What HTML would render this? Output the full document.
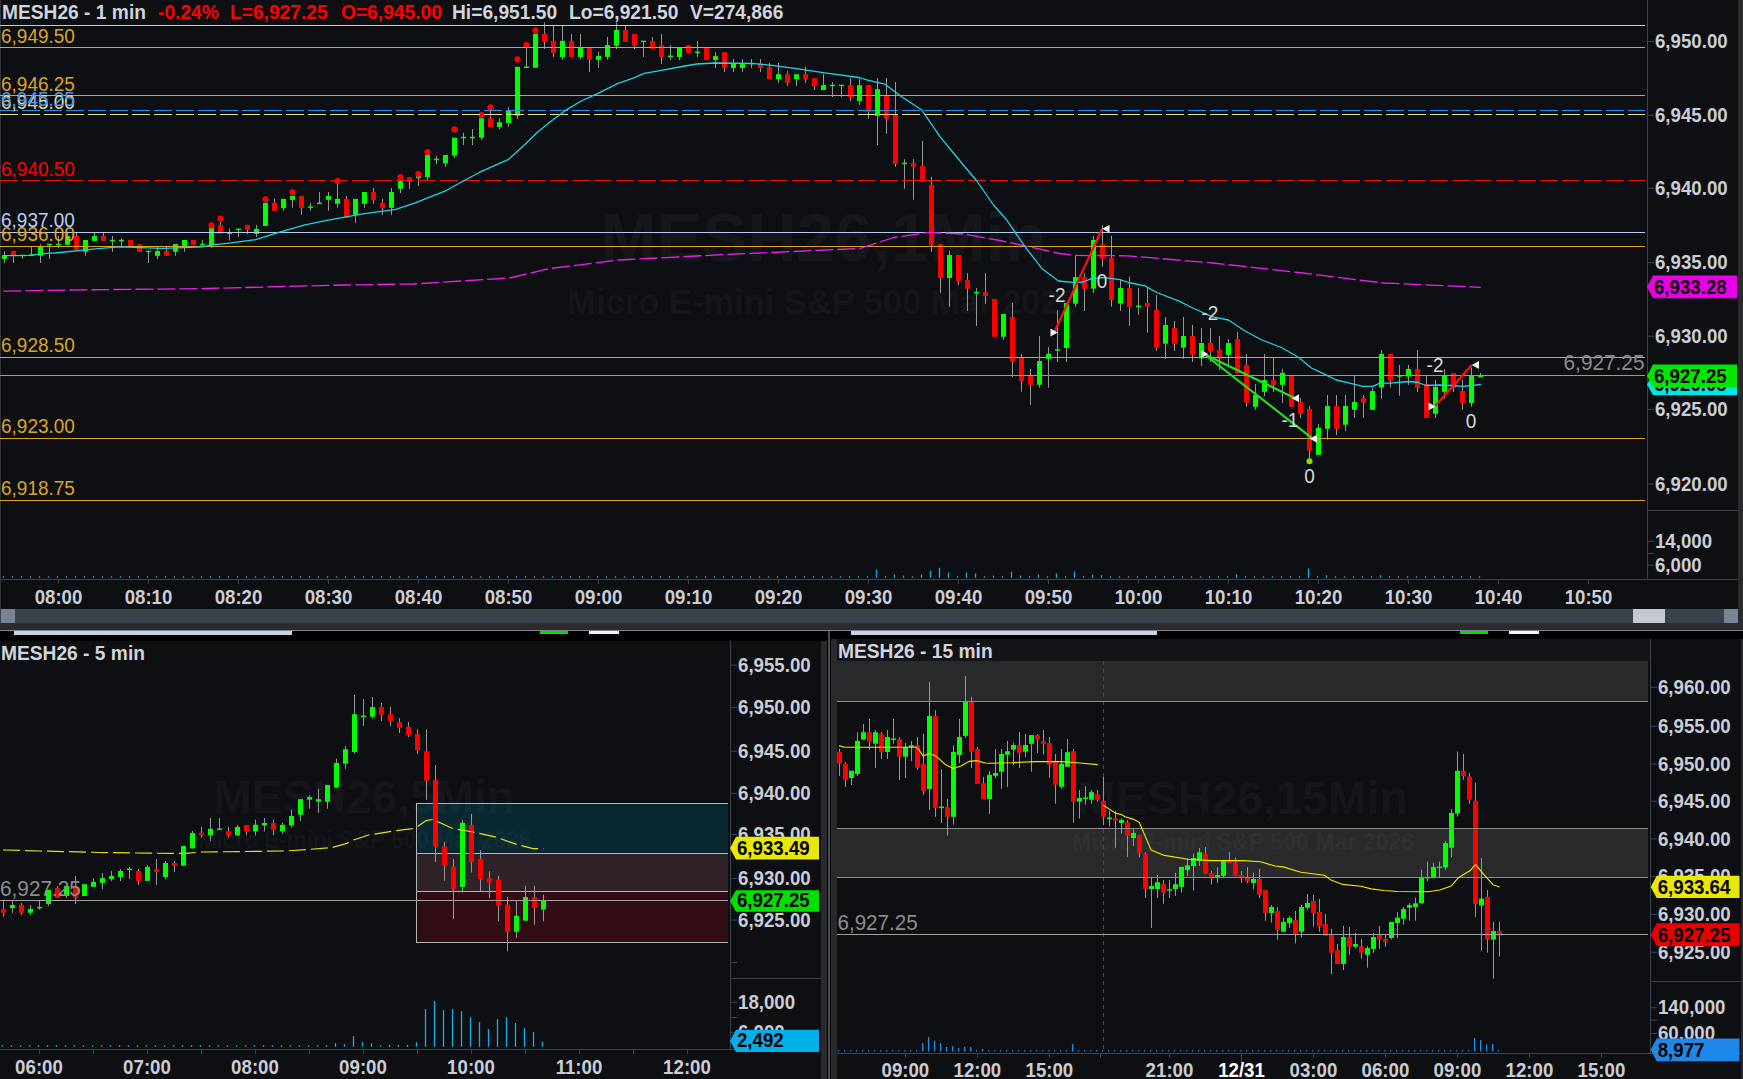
<!DOCTYPE html><html><head><meta charset="utf-8"><style>html,body{margin:0;padding:0;background:#0e0f12;width:1743px;height:1079px;overflow:hidden} svg{display:block} text{font-family:'Liberation Sans', sans-serif}</style></head><body><svg width="1743" height="1079" viewBox="0 0 1743 1079"><rect x="0" y="0" width="1743" height="1079" fill="#0e0f12"/><text x="823" y="260.7" font-size="68" fill="rgba(120,140,170,0.075)" font-weight="bold" text-anchor="middle" >MESH26,1Min</text><text x="823" y="313.7" font-size="34.5" fill="rgba(120,140,170,0.075)" font-weight="bold" text-anchor="middle" >Micro E-mini S&amp;P 500 Mar 2026</text><line x1="0.5" y1="0" x2="0.5" y2="609" stroke="#303236" stroke-width="1"/><rect x="4" y="251.2" width="1" height="11.8" fill="#969696"/><rect x="13" y="250.9" width="1" height="12.1" fill="#969696"/><rect x="22" y="255.4" width="1" height="3.4" fill="#969696"/><rect x="31" y="247.0" width="1" height="8.0" fill="#969696"/><rect x="40" y="244.3" width="1" height="18.7" fill="#969696"/><rect x="49" y="244.6" width="1" height="14.4" fill="#969696"/><rect x="58" y="236.0" width="1" height="12.0" fill="#969696"/><rect x="67" y="232.0" width="1" height="12.8" fill="#969696"/><rect x="76" y="232.0" width="1" height="18.8" fill="#969696"/><rect x="85" y="240.0" width="1" height="15.8" fill="#969696"/><rect x="94" y="233.0" width="1" height="7.9" fill="#969696"/><rect x="103" y="233.0" width="1" height="7.9" fill="#969696"/><rect x="112" y="236.0" width="1" height="15.8" fill="#969696"/><rect x="121" y="238.6" width="1" height="9.4" fill="#969696"/><rect x="130" y="240.0" width="1" height="5.9" fill="#969696"/><rect x="139" y="244.2" width="1" height="7.6" fill="#969696"/><rect x="148" y="251.4" width="1" height="11.6" fill="#969696"/><rect x="157" y="247.0" width="1" height="12.0" fill="#969696"/><rect x="166" y="247.0" width="1" height="8.8" fill="#969696"/><rect x="175" y="244.0" width="1" height="11.8" fill="#969696"/><rect x="184" y="240.0" width="1" height="11.8" fill="#969696"/><rect x="193" y="240.0" width="1" height="4.8" fill="#969696"/><rect x="202" y="240.0" width="1" height="5.2" fill="#969696"/><rect x="211" y="226.7" width="1" height="21.3" fill="#969696"/><rect x="220" y="222.0" width="1" height="11.7" fill="#969696"/><rect x="229" y="228.6" width="1" height="11.9" fill="#969696"/><rect x="238" y="229.3" width="1" height="7.7" fill="#969696"/><rect x="247" y="224.9" width="1" height="9.0" fill="#969696"/><rect x="256" y="224.9" width="1" height="12.1" fill="#969696"/><rect x="265" y="202.9" width="1" height="23.1" fill="#969696"/><rect x="274" y="199.0" width="1" height="11.8" fill="#969696"/><rect x="283" y="198.9" width="1" height="11.9" fill="#969696"/><rect x="292" y="195.9" width="1" height="11.9" fill="#969696"/><rect x="301" y="195.9" width="1" height="18.9" fill="#969696"/><rect x="310" y="202.9" width="1" height="7.9" fill="#969696"/><rect x="319" y="192.0" width="1" height="11.3" fill="#969696"/><rect x="328" y="192.0" width="1" height="18.8" fill="#969696"/><rect x="337" y="183.8" width="1" height="24.0" fill="#969696"/><rect x="346" y="196.0" width="1" height="22.0" fill="#969696"/><rect x="355" y="198.9" width="1" height="24.2" fill="#969696"/><rect x="364" y="192.0" width="1" height="15.8" fill="#969696"/><rect x="373" y="188.0" width="1" height="15.8" fill="#969696"/><rect x="382" y="198.9" width="1" height="15.9" fill="#969696"/><rect x="391" y="188.0" width="1" height="26.8" fill="#969696"/><rect x="400" y="181.1" width="1" height="11.9" fill="#969696"/><rect x="409" y="177.2" width="1" height="11.6" fill="#969696"/><rect x="418" y="176.1" width="1" height="9.9" fill="#969696"/><rect x="427" y="152.0" width="1" height="28.0" fill="#969696"/><rect x="436" y="156.0" width="1" height="8.0" fill="#969696"/><rect x="445" y="155.0" width="1" height="12.0" fill="#969696"/><rect x="454" y="137.7" width="1" height="20.3" fill="#969696"/><rect x="463" y="132.8" width="1" height="12.2" fill="#969696"/><rect x="472" y="129.0" width="1" height="16.0" fill="#969696"/><rect x="481" y="118.3" width="1" height="21.7" fill="#969696"/><rect x="490" y="111.0" width="1" height="15.9" fill="#969696"/><rect x="499" y="118.3" width="1" height="11.2" fill="#969696"/><rect x="508" y="107.0" width="1" height="19.9" fill="#969696"/><rect x="517" y="66.8" width="1" height="52.2" fill="#969696"/><rect x="526" y="45.0" width="1" height="22.2" fill="#969696"/><rect x="535" y="33.9" width="1" height="33.9" fill="#969696"/><rect x="544" y="22.4" width="1" height="26.6" fill="#969696"/><rect x="553" y="26.0" width="1" height="31.0" fill="#969696"/><rect x="562" y="26.0" width="1" height="33.6" fill="#969696"/><rect x="571" y="33.9" width="1" height="23.1" fill="#969696"/><rect x="580" y="33.9" width="1" height="25.7" fill="#969696"/><rect x="589" y="47.7" width="1" height="24.3" fill="#969696"/><rect x="598" y="51.7" width="1" height="16.1" fill="#969696"/><rect x="607" y="36.9" width="1" height="22.7" fill="#969696"/><rect x="616" y="22.6" width="1" height="26.4" fill="#969696"/><rect x="625" y="26.0" width="1" height="15.8" fill="#969696"/><rect x="634" y="33.9" width="1" height="15.1" fill="#969696"/><rect x="643" y="41.4" width="1" height="15.6" fill="#969696"/><rect x="652" y="36.9" width="1" height="11.8" fill="#969696"/><rect x="661" y="34.0" width="1" height="30.0" fill="#969696"/><rect x="670" y="45.2" width="1" height="14.8" fill="#969696"/><rect x="679" y="47.8" width="1" height="12.2" fill="#969696"/><rect x="688" y="45.2" width="1" height="7.6" fill="#969696"/><rect x="697" y="41.2" width="1" height="15.8" fill="#969696"/><rect x="706" y="47.8" width="1" height="12.2" fill="#969696"/><rect x="715" y="52.2" width="1" height="15.8" fill="#969696"/><rect x="724" y="52.2" width="1" height="19.8" fill="#969696"/><rect x="733" y="59.0" width="1" height="13.0" fill="#969696"/><rect x="742" y="59.0" width="1" height="13.0" fill="#969696"/><rect x="751" y="59.0" width="1" height="9.0" fill="#969696"/><rect x="760" y="59.0" width="1" height="13.0" fill="#969696"/><rect x="769" y="63.0" width="1" height="16.1" fill="#969696"/><rect x="778" y="63.0" width="1" height="19.8" fill="#969696"/><rect x="787" y="71.2" width="1" height="14.8" fill="#969696"/><rect x="796" y="74.2" width="1" height="11.8" fill="#969696"/><rect x="805" y="67.0" width="1" height="15.8" fill="#969696"/><rect x="814" y="78.2" width="1" height="11.8" fill="#969696"/><rect x="823" y="74.2" width="1" height="15.8" fill="#969696"/><rect x="832" y="82.1" width="1" height="14.9" fill="#969696"/><rect x="841" y="85.4" width="1" height="11.6" fill="#969696"/><rect x="850" y="78.2" width="1" height="23.1" fill="#969696"/><rect x="859" y="78.2" width="1" height="26.8" fill="#969696"/><rect x="868" y="85.0" width="1" height="33.7" fill="#969696"/><rect x="877" y="78.0" width="1" height="67.0" fill="#969696"/><rect x="886" y="78.0" width="1" height="55.7" fill="#969696"/><rect x="895" y="82.0" width="1" height="84.8" fill="#969696"/><rect x="904" y="159.3" width="1" height="29.5" fill="#969696"/><rect x="913" y="159.3" width="1" height="40.5" fill="#969696"/><rect x="922" y="140.9" width="1" height="40.9" fill="#969696"/><rect x="931" y="176.8" width="1" height="74.9" fill="#969696"/><rect x="940" y="244.2" width="1" height="48.7" fill="#969696"/><rect x="949" y="250.9" width="1" height="55.9" fill="#969696"/><rect x="958" y="255.0" width="1" height="30.0" fill="#969696"/><rect x="967" y="273.0" width="1" height="38.0" fill="#969696"/><rect x="976" y="288.0" width="1" height="38.0" fill="#969696"/><rect x="985" y="273.0" width="1" height="30.7" fill="#969696"/><rect x="994" y="299.0" width="1" height="37.8" fill="#969696"/><rect x="1003" y="314.0" width="1" height="25.8" fill="#969696"/><rect x="1012" y="303.0" width="1" height="73.8" fill="#969696"/><rect x="1021" y="353.8" width="1" height="38.0" fill="#969696"/><rect x="1030" y="368.8" width="1" height="36.2" fill="#969696"/><rect x="1039" y="336.0" width="1" height="51.7" fill="#969696"/><rect x="1048" y="347.0" width="1" height="40.7" fill="#969696"/><rect x="1057" y="310.0" width="1" height="52.0" fill="#969696"/><rect x="1066" y="303.0" width="1" height="59.0" fill="#969696"/><rect x="1075" y="255.9" width="1" height="50.9" fill="#969696"/><rect x="1084" y="273.4" width="1" height="37.6" fill="#969696"/><rect x="1093" y="235.8" width="1" height="57.1" fill="#969696"/><rect x="1102" y="225.0" width="1" height="41.7" fill="#969696"/><rect x="1111" y="235.8" width="1" height="70.9" fill="#969696"/><rect x="1120" y="280.0" width="1" height="30.9" fill="#969696"/><rect x="1129" y="276.7" width="1" height="49.2" fill="#969696"/><rect x="1138" y="288.0" width="1" height="26.7" fill="#969696"/><rect x="1147" y="288.0" width="1" height="44.6" fill="#969696"/><rect x="1156" y="295.0" width="1" height="56.0" fill="#969696"/><rect x="1165" y="317.0" width="1" height="41.8" fill="#969696"/><rect x="1174" y="321.0" width="1" height="30.0" fill="#969696"/><rect x="1183" y="317.0" width="1" height="41.8" fill="#969696"/><rect x="1192" y="325.0" width="1" height="36.8" fill="#969696"/><rect x="1201" y="328.0" width="1" height="38.0" fill="#969696"/><rect x="1210" y="328.0" width="1" height="33.8" fill="#969696"/><rect x="1219" y="336.0" width="1" height="34.0" fill="#969696"/><rect x="1228" y="339.0" width="1" height="27.0" fill="#969696"/><rect x="1237" y="332.0" width="1" height="41.4" fill="#969696"/><rect x="1246" y="354.0" width="1" height="52.8" fill="#969696"/><rect x="1255" y="384.0" width="1" height="25.8" fill="#969696"/><rect x="1264" y="354.0" width="1" height="42.0" fill="#969696"/><rect x="1273" y="358.0" width="1" height="34.0" fill="#969696"/><rect x="1282" y="368.8" width="1" height="34.2" fill="#969696"/><rect x="1291" y="376.0" width="1" height="30.9" fill="#969696"/><rect x="1300" y="398.0" width="1" height="19.8" fill="#969696"/><rect x="1309" y="406.0" width="1" height="52.8" fill="#969696"/><rect x="1318" y="424.0" width="1" height="30.8" fill="#969696"/><rect x="1327" y="395.0" width="1" height="44.5" fill="#969696"/><rect x="1336" y="395.0" width="1" height="40.0" fill="#969696"/><rect x="1345" y="395.0" width="1" height="36.0" fill="#969696"/><rect x="1354" y="375.7" width="1" height="42.1" fill="#969696"/><rect x="1363" y="395.0" width="1" height="22.8" fill="#969696"/><rect x="1372" y="387.5" width="1" height="22.3" fill="#969696"/><rect x="1381" y="350.0" width="1" height="48.8" fill="#969696"/><rect x="1390" y="354.0" width="1" height="33.5" fill="#969696"/><rect x="1399" y="365.0" width="1" height="30.7" fill="#969696"/><rect x="1408" y="365.0" width="1" height="20.0" fill="#969696"/><rect x="1417" y="350.0" width="1" height="42.0" fill="#969696"/><rect x="1426" y="375.9" width="1" height="42.1" fill="#969696"/><rect x="1435" y="380.0" width="1" height="38.0" fill="#969696"/><rect x="1444" y="369.0" width="1" height="29.8" fill="#969696"/><rect x="1453" y="373.0" width="1" height="19.0" fill="#969696"/><rect x="1462" y="380.0" width="1" height="29.6" fill="#969696"/><rect x="1471" y="367.5" width="1" height="39.2" fill="#969696"/><rect x="1480" y="373.0" width="1" height="3.3" fill="#969696"/><rect x="2" y="255.1" width="5" height="4.0" fill="#00ff00"/><rect x="11" y="250.9" width="5" height="4.0" fill="#ff0000"/><rect x="20" y="254.7" width="5" height="1.5" fill="#00ff00"/><rect x="29" y="254.2" width="5" height="1.5" fill="#00ff00"/><rect x="38" y="247.0" width="5" height="8.8" fill="#00ff00"/><rect x="47" y="243.8" width="5" height="1.5" fill="#00ff00"/><rect x="56" y="243.8" width="5" height="1.5" fill="#00ff00"/><rect x="65" y="236.0" width="5" height="8.8" fill="#00ff00"/><rect x="74" y="236.0" width="5" height="14.8" fill="#ff0000"/><rect x="83" y="240.0" width="5" height="11.8" fill="#00ff00"/><rect x="92" y="236.0" width="5" height="4.9" fill="#00ff00"/><rect x="101" y="236.0" width="5" height="4.9" fill="#ff0000"/><rect x="110" y="239.8" width="5" height="1.5" fill="#00ff00"/><rect x="119" y="239.8" width="5" height="1.5" fill="#00ff00"/><rect x="128" y="240.0" width="5" height="5.9" fill="#ff0000"/><rect x="137" y="244.2" width="5" height="7.6" fill="#ff0000"/><rect x="146" y="250.7" width="5" height="1.5" fill="#00ff00"/><rect x="155" y="251.0" width="5" height="4.8" fill="#00ff00"/><rect x="164" y="251.0" width="5" height="4.8" fill="#ff0000"/><rect x="173" y="244.0" width="5" height="7.8" fill="#00ff00"/><rect x="182" y="240.0" width="5" height="5.9" fill="#00ff00"/><rect x="191" y="240.0" width="5" height="4.8" fill="#ff0000"/><rect x="200" y="243.8" width="5" height="1.5" fill="#00ff00"/><rect x="209" y="226.7" width="5" height="18.5" fill="#00ff00"/><rect x="218" y="225.2" width="5" height="8.5" fill="#ff0000"/><rect x="227" y="232.4" width="5" height="1.5" fill="#00ff00"/><rect x="236" y="228.6" width="5" height="1.5" fill="#00ff00"/><rect x="245" y="224.9" width="5" height="5.0" fill="#ff0000"/><rect x="254" y="228.9" width="5" height="5.0" fill="#00ff00"/><rect x="263" y="202.9" width="5" height="23.1" fill="#00ff00"/><rect x="272" y="202.9" width="5" height="7.9" fill="#ff0000"/><rect x="281" y="198.9" width="5" height="9.3" fill="#00ff00"/><rect x="290" y="195.9" width="5" height="4.0" fill="#00ff00"/><rect x="299" y="195.9" width="5" height="11.9" fill="#ff0000"/><rect x="308" y="206.4" width="5" height="1.5" fill="#00ff00"/><rect x="317" y="202.6" width="5" height="1.5" fill="#00ff00"/><rect x="326" y="195.9" width="5" height="4.0" fill="#00ff00"/><rect x="335" y="198.9" width="5" height="4.9" fill="#00ff00"/><rect x="344" y="198.9" width="5" height="19.1" fill="#ff0000"/><rect x="353" y="198.9" width="5" height="15.9" fill="#00ff00"/><rect x="362" y="192.0" width="5" height="11.8" fill="#00ff00"/><rect x="371" y="192.0" width="5" height="7.9" fill="#ff0000"/><rect x="380" y="202.9" width="5" height="4.9" fill="#ff0000"/><rect x="389" y="192.0" width="5" height="15.8" fill="#00ff00"/><rect x="398" y="181.1" width="5" height="7.7" fill="#00ff00"/><rect x="407" y="177.2" width="5" height="4.6" fill="#ff0000"/><rect x="416" y="176.1" width="5" height="2.1" fill="#00ff00"/><rect x="425" y="155.0" width="5" height="22.0" fill="#00ff00"/><rect x="434" y="158.7" width="5" height="1.5" fill="#00ff00"/><rect x="443" y="155.0" width="5" height="8.5" fill="#00ff00"/><rect x="452" y="137.7" width="5" height="17.9" fill="#00ff00"/><rect x="461" y="136.8" width="5" height="1.5" fill="#00ff00"/><rect x="470" y="136.8" width="5" height="1.5" fill="#00ff00"/><rect x="479" y="118.3" width="5" height="19.4" fill="#00ff00"/><rect x="488" y="118.3" width="5" height="8.6" fill="#ff0000"/><rect x="497" y="122.3" width="5" height="4.6" fill="#00ff00"/><rect x="506" y="111.0" width="5" height="12.0" fill="#00ff00"/><rect x="515" y="66.8" width="5" height="48.9" fill="#00ff00"/><rect x="524" y="66.5" width="5" height="1.5" fill="#00ff00"/><rect x="533" y="33.9" width="5" height="33.9" fill="#00ff00"/><rect x="542" y="33.9" width="5" height="7.9" fill="#ff0000"/><rect x="551" y="40.8" width="5" height="11.9" fill="#ff0000"/><rect x="560" y="40.8" width="5" height="16.2" fill="#00ff00"/><rect x="569" y="40.8" width="5" height="16.2" fill="#ff0000"/><rect x="578" y="47.7" width="5" height="9.3" fill="#00ff00"/><rect x="587" y="47.7" width="5" height="11.9" fill="#ff0000"/><rect x="596" y="55.9" width="5" height="4.0" fill="#00ff00"/><rect x="605" y="45.0" width="5" height="12.0" fill="#00ff00"/><rect x="614" y="29.9" width="5" height="15.8" fill="#00ff00"/><rect x="623" y="29.9" width="5" height="11.9" fill="#ff0000"/><rect x="632" y="33.9" width="5" height="11.8" fill="#ff0000"/><rect x="641" y="40.6" width="5" height="1.5" fill="#00ff00"/><rect x="650" y="41.2" width="5" height="7.5" fill="#ff0000"/><rect x="659" y="45.2" width="5" height="11.8" fill="#ff0000"/><rect x="668" y="55.6" width="5" height="1.5" fill="#00ff00"/><rect x="677" y="47.8" width="5" height="9.2" fill="#00ff00"/><rect x="686" y="45.2" width="5" height="7.6" fill="#ff0000"/><rect x="695" y="51.6" width="5" height="1.5" fill="#00ff00"/><rect x="704" y="47.8" width="5" height="12.2" fill="#ff0000"/><rect x="713" y="56.1" width="5" height="3.9" fill="#00ff00"/><rect x="722" y="52.2" width="5" height="15.8" fill="#ff0000"/><rect x="731" y="64.0" width="5" height="4.0" fill="#00ff00"/><rect x="740" y="64.0" width="5" height="4.0" fill="#00ff00"/><rect x="749" y="62.9" width="5" height="1.5" fill="#00ff00"/><rect x="758" y="63.3" width="5" height="4.7" fill="#ff0000"/><rect x="767" y="67.2" width="5" height="11.9" fill="#ff0000"/><rect x="776" y="74.2" width="5" height="4.9" fill="#00ff00"/><rect x="785" y="74.2" width="5" height="8.6" fill="#ff0000"/><rect x="794" y="74.2" width="5" height="4.9" fill="#00ff00"/><rect x="803" y="74.2" width="5" height="4.9" fill="#ff0000"/><rect x="812" y="78.2" width="5" height="7.8" fill="#ff0000"/><rect x="821" y="85.2" width="5" height="4.8" fill="#00ff00"/><rect x="830" y="84.7" width="5" height="1.5" fill="#00ff00"/><rect x="839" y="84.7" width="5" height="1.5" fill="#00ff00"/><rect x="848" y="85.2" width="5" height="11.8" fill="#ff0000"/><rect x="857" y="85.2" width="5" height="15.8" fill="#00ff00"/><rect x="866" y="85.0" width="5" height="26.7" fill="#ff0000"/><rect x="875" y="89.2" width="5" height="26.7" fill="#00ff00"/><rect x="884" y="95.9" width="5" height="22.8" fill="#ff0000"/><rect x="893" y="114.2" width="5" height="49.6" fill="#ff0000"/><rect x="902" y="162.7" width="5" height="1.5" fill="#00ff00"/><rect x="911" y="163.0" width="5" height="3.8" fill="#ff0000"/><rect x="920" y="166.0" width="5" height="15.8" fill="#ff0000"/><rect x="929" y="184.8" width="5" height="60.0" fill="#ff0000"/><rect x="938" y="244.2" width="5" height="33.8" fill="#ff0000"/><rect x="947" y="255.0" width="5" height="23.0" fill="#00ff00"/><rect x="956" y="255.0" width="5" height="25.9" fill="#ff0000"/><rect x="965" y="280.0" width="5" height="8.7" fill="#ff0000"/><rect x="974" y="291.9" width="5" height="1.5" fill="#00ff00"/><rect x="983" y="292.0" width="5" height="4.0" fill="#ff0000"/><rect x="992" y="299.0" width="5" height="37.8" fill="#ff0000"/><rect x="1001" y="314.0" width="5" height="22.8" fill="#00ff00"/><rect x="1010" y="317.0" width="5" height="44.8" fill="#ff0000"/><rect x="1019" y="357.6" width="5" height="23.4" fill="#ff0000"/><rect x="1028" y="376.0" width="5" height="8.8" fill="#ff0000"/><rect x="1037" y="361.0" width="5" height="23.8" fill="#00ff00"/><rect x="1046" y="353.8" width="5" height="5.0" fill="#00ff00"/><rect x="1055" y="349.2" width="5" height="1.5" fill="#00ff00"/><rect x="1064" y="303.0" width="5" height="45.0" fill="#00ff00"/><rect x="1073" y="277.0" width="5" height="26.7" fill="#00ff00"/><rect x="1082" y="277.0" width="5" height="11.7" fill="#ff0000"/><rect x="1091" y="240.0" width="5" height="48.7" fill="#00ff00"/><rect x="1100" y="244.2" width="5" height="14.5" fill="#ff0000"/><rect x="1109" y="258.0" width="5" height="42.0" fill="#ff0000"/><rect x="1118" y="288.0" width="5" height="15.7" fill="#00ff00"/><rect x="1127" y="288.0" width="5" height="18.7" fill="#ff0000"/><rect x="1136" y="305.6" width="5" height="1.5" fill="#00ff00"/><rect x="1145" y="303.0" width="5" height="3.7" fill="#ff0000"/><rect x="1154" y="310.0" width="5" height="37.6" fill="#ff0000"/><rect x="1163" y="325.0" width="5" height="18.7" fill="#00ff00"/><rect x="1172" y="328.0" width="5" height="15.7" fill="#ff0000"/><rect x="1181" y="336.0" width="5" height="11.6" fill="#00ff00"/><rect x="1190" y="336.0" width="5" height="18.8" fill="#ff0000"/><rect x="1199" y="343.0" width="5" height="15.4" fill="#00ff00"/><rect x="1208" y="343.0" width="5" height="8.0" fill="#ff0000"/><rect x="1217" y="350.0" width="5" height="8.4" fill="#ff0000"/><rect x="1226" y="343.0" width="5" height="11.8" fill="#00ff00"/><rect x="1235" y="339.0" width="5" height="34.4" fill="#ff0000"/><rect x="1244" y="365.0" width="5" height="37.6" fill="#ff0000"/><rect x="1253" y="394.8" width="5" height="12.0" fill="#00ff00"/><rect x="1262" y="380.0" width="5" height="11.8" fill="#00ff00"/><rect x="1271" y="380.0" width="5" height="4.8" fill="#ff0000"/><rect x="1280" y="372.9" width="5" height="11.9" fill="#00ff00"/><rect x="1289" y="376.0" width="5" height="30.9" fill="#ff0000"/><rect x="1298" y="402.0" width="5" height="11.8" fill="#ff0000"/><rect x="1307" y="408.8" width="5" height="41.9" fill="#ff0000"/><rect x="1316" y="427.8" width="5" height="27.0" fill="#00ff00"/><rect x="1325" y="406.0" width="5" height="22.8" fill="#00ff00"/><rect x="1334" y="406.0" width="5" height="22.8" fill="#ff0000"/><rect x="1343" y="406.0" width="5" height="18.8" fill="#00ff00"/><rect x="1352" y="402.0" width="5" height="7.8" fill="#00ff00"/><rect x="1361" y="398.0" width="5" height="4.8" fill="#ff0000"/><rect x="1370" y="391.0" width="5" height="18.8" fill="#00ff00"/><rect x="1379" y="354.0" width="5" height="33.5" fill="#00ff00"/><rect x="1388" y="354.0" width="5" height="26.7" fill="#ff0000"/><rect x="1397" y="375.2" width="5" height="1.5" fill="#00ff00"/><rect x="1406" y="369.0" width="5" height="7.5" fill="#00ff00"/><rect x="1415" y="369.0" width="5" height="19.0" fill="#ff0000"/><rect x="1424" y="384.0" width="5" height="34.0" fill="#ff0000"/><rect x="1433" y="387.0" width="5" height="26.8" fill="#00ff00"/><rect x="1442" y="375.9" width="5" height="16.0" fill="#00ff00"/><rect x="1451" y="373.0" width="5" height="15.0" fill="#ff0000"/><rect x="1460" y="391.0" width="5" height="12.0" fill="#ff0000"/><rect x="1469" y="375.9" width="5" height="27.1" fill="#00ff00"/><rect x="1478" y="375.6" width="5" height="1.5" fill="#00ff00"/><circle cx="211.5" cy="225.4" r="3.1" fill="#ff0000"/><circle cx="220.5" cy="218.6" r="3.1" fill="#ff0000"/><circle cx="265.5" cy="199.3" r="3.1" fill="#ff0000"/><circle cx="292.5" cy="192.3" r="3.1" fill="#ff0000"/><circle cx="337.5" cy="181.1" r="3.1" fill="#ff0000"/><circle cx="400.5" cy="177.2" r="3.1" fill="#ff0000"/><circle cx="418.5" cy="174.1" r="3.1" fill="#ff0000"/><circle cx="427.5" cy="152" r="3.1" fill="#ff0000"/><circle cx="454.5" cy="129.4" r="3.1" fill="#ff0000"/><circle cx="481.5" cy="115" r="3.1" fill="#ff0000"/><circle cx="490.5" cy="107.4" r="3.1" fill="#ff0000"/><circle cx="517.5" cy="59.3" r="3.1" fill="#ff0000"/><circle cx="526.5" cy="45" r="3.1" fill="#ff0000"/><circle cx="535.5" cy="30.3" r="3.1" fill="#ff0000"/><circle cx="1309.5" cy="461.3" r="3" fill="#88e000"/><line x1="0" y1="25.5" x2="1645" y2="25.5" stroke="#b4cdf0" stroke-width="1"/><line x1="0" y1="47.5" x2="1645" y2="47.5" stroke="#dba427" stroke-width="1"/><line x1="0" y1="95.5" x2="1645" y2="95.5" stroke="#dba427" stroke-width="1"/><line x1="0" y1="114.5" x2="1645" y2="114.5" stroke="#efdc8a" stroke-width="1" stroke-dasharray="18,4"/><line x1="0" y1="110.5" x2="1645" y2="110.5" stroke="#2f8ff0" stroke-width="1" stroke-dasharray="18,4"/><line x1="0" y1="180.5" x2="1645" y2="180.5" stroke="#f01010" stroke-width="1" stroke-dasharray="18,4"/><line x1="0" y1="232.5" x2="1645" y2="232.5" stroke="#b4cdf0" stroke-width="1"/><line x1="0" y1="246.5" x2="1645" y2="246.5" stroke="#dba427" stroke-width="1"/><line x1="0" y1="357.5" x2="1645" y2="357.5" stroke="#dba427" stroke-width="1"/><line x1="0" y1="375.5" x2="1645" y2="375.5" stroke="#9a9a9a" stroke-width="1"/><line x1="0" y1="438.5" x2="1645" y2="438.5" stroke="#dba427" stroke-width="1"/><line x1="0" y1="500.5" x2="1645" y2="500.5" stroke="#dba427" stroke-width="1"/><text x="1" y="43" font-size="19" fill="#dba427" font-weight="normal" text-anchor="start" transform="matrix(1,0,0,1.07,0,-3.01)" >6,949.50</text><text x="1" y="90.7" font-size="19" fill="#dba427" font-weight="normal" text-anchor="start" transform="matrix(1,0,0,1.07,0,-6.35)" >6,946.25</text><text x="1" y="109.5" font-size="19" fill="#e9d890" font-weight="normal" text-anchor="start" transform="matrix(1,0,0,1.07,0,-7.67)" >6,945.00</text><text x="1" y="105.8" font-size="19" fill="#3f9af2" font-weight="normal" text-anchor="start" transform="matrix(1,0,0,1.07,0,-7.41)" >6,945.25</text><text x="1" y="175.7" font-size="19" fill="#ff0000" font-weight="normal" text-anchor="start" transform="matrix(1,0,0,1.07,0,-12.30)" >6,940.50</text><text x="1" y="226.7" font-size="19" fill="#b4cdf0" font-weight="normal" text-anchor="start" transform="matrix(1,0,0,1.07,0,-15.87)" >6,937.00</text><text x="1" y="241.3" font-size="19" fill="#dba427" font-weight="normal" text-anchor="start" transform="matrix(1,0,0,1.07,0,-16.89)" >6,936.00</text><text x="1" y="352" font-size="19" fill="#dba427" font-weight="normal" text-anchor="start" transform="matrix(1,0,0,1.07,0,-24.64)" >6,928.50</text><text x="1" y="433.5" font-size="19" fill="#dba427" font-weight="normal" text-anchor="start" transform="matrix(1,0,0,1.07,0,-30.35)" >6,923.00</text><text x="1" y="495.5" font-size="19" fill="#dba427" font-weight="normal" text-anchor="start" transform="matrix(1,0,0,1.07,0,-34.69)" >6,918.75</text><text x="1644.5" y="370.5" font-size="20.8" fill="#8c8c8c" font-weight="normal" text-anchor="end" transform="matrix(1,0,0,1.07,0,-25.94)" >6,927.25</text><polyline points="3.4,291.2 68.8,290.0 206.5,288.5 344.0,285.0 413.0,284.0 509.5,278.0 550.0,268.5 618.8,260.0 722.0,254.7 860.0,248.5 894.0,237.5 928.7,232.4 963.0,234.0 1000.0,240.5 1040.0,249.2 1059.7,253.5 1075.0,255.4 1128.0,255.8 1213.0,263.0 1298.4,272.5 1383.6,283.0 1480.8,287.4" fill="none" stroke="#ec22ec" stroke-width="1.3" stroke-dasharray="18,4" stroke-linejoin="round"/><polyline points="3.4,255.6 32.7,255.4 37.9,254.2 49.9,253.2 55.0,253.0 76.5,250.9 98.0,248.7 119.5,246.8 141.0,247.7 162.6,248.3 184.1,247.7 202.7,246.8 212.8,244.8 227.1,243.4 255.8,239.7 277.3,232.9 305.0,224.8 327.0,220.3 361.4,214.1 395.9,209.3 415.8,202.6 431.5,196.3 445.7,190.8 463.0,181.3 478.8,172.7 494.5,165.6 508.7,159.3 526.0,143.5 537.1,132.5 549.7,122.2 565.5,110.4 581.2,101.0 597.0,93.9 617.5,83.6 633.2,78.1 644.2,73.4 660.0,70.7 679.6,67.0 696.7,64.0 715.2,63.0 752.2,63.3 772.0,65.4 798.4,68.9 824.7,72.9 859.0,77.5 868.3,80.3 885.0,84.2 901.7,96.7 921.7,110.0 940.0,136.7 960.0,161.0 976.8,181.0 993.5,205.0 1006.7,220.0 1025.0,246.7 1041.8,268.4 1058.5,281.0 1075.0,282.6 1083.5,282.0 1091.8,278.4 1105.0,277.6 1120.0,279.7 1128.4,282.5 1145.0,285.9 1156.7,292.5 1178.4,300.9 1191.8,307.5 1211.8,316.7 1228.5,320.0 1245.0,331.0 1261.8,340.0 1281.3,347.5 1298.8,357.5 1311.3,368.0 1325.0,374.4 1336.3,380.0 1352.6,383.8 1362.6,386.3 1372.6,386.3 1380.0,383.2 1390.0,383.2 1408.9,381.5 1418.3,382.5 1425.8,385.5 1439.2,385.0 1451.7,385.5 1462.5,386.3 1472.6,385.5 1481.0,384.4" fill="none" stroke="#20d4e4" stroke-width="1.3" stroke-linejoin="round"/><polyline points="1054.0,333.0 1102.0,229.0" fill="none" stroke="#ff1010" stroke-width="2.2" stroke-linejoin="round"/><path d="M1050.5,328.6 L1057.7,332.6 L1050.5,336.6 Z" fill="#f4f2ea"/><path d="M1109.5,224.8 L1102.3,228.8 L1109.5,232.8 Z" fill="#f4f2ea"/><polyline points="1204.0,354.0 1295.0,398.2" fill="none" stroke="#20e020" stroke-width="2.2" stroke-linejoin="round"/><polyline points="1204.0,354.0 1313.0,438.8" fill="none" stroke="#20e020" stroke-width="2.2" stroke-linejoin="round"/><path d="M1201,350.0 L1208.2,354 L1201,358.0 Z" fill="#f4f2ea"/><path d="M1299,394.2 L1291.8,398.2 L1299,402.2 Z" fill="#f4f2ea"/><path d="M1317,434.8 L1309.8,438.8 L1317,442.8 Z" fill="#f4f2ea"/><polyline points="1435.0,406.3 1471.7,365.0" fill="none" stroke="#ff1010" stroke-width="2.2" stroke-linejoin="round"/><path d="M1428.5,402.5 L1435.7,406.5 L1428.5,410.5 Z" fill="#f4f2ea"/><path d="M1479,361.0 L1471.8,365 L1479,369.0 Z" fill="#f4f2ea"/><text x="1057" y="302" font-size="19" fill="#d8d8d8" font-weight="normal" text-anchor="middle" transform="matrix(1,0,0,1.07,0,-21.14)" >-2</text><text x="1102" y="288" font-size="19" fill="#d8d8d8" font-weight="normal" text-anchor="middle" transform="matrix(1,0,0,1.07,0,-20.16)" >0</text><text x="1210" y="320" font-size="19" fill="#d8d8d8" font-weight="normal" text-anchor="middle" transform="matrix(1,0,0,1.07,0,-22.40)" >-2</text><text x="1290" y="427" font-size="19" fill="#d8d8d8" font-weight="normal" text-anchor="middle" transform="matrix(1,0,0,1.07,0,-29.89)" >-1</text><text x="1309.5" y="483" font-size="19" fill="#d8d8d8" font-weight="normal" text-anchor="middle" transform="matrix(1,0,0,1.07,0,-33.81)" >0</text><text x="1435" y="372" font-size="19" fill="#d8d8d8" font-weight="normal" text-anchor="middle" transform="matrix(1,0,0,1.07,0,-26.04)" >-2</text><text x="1471" y="428" font-size="19" fill="#d8d8d8" font-weight="normal" text-anchor="middle" transform="matrix(1,0,0,1.07,0,-29.96)" >0</text><text y="18.7" font-size="19.2" font-weight="bold" transform="matrix(1,0,0,1.04,0,-0.75)"><tspan x="2" fill="#d0d4dc">MESH26 - 1 min</tspan><tspan x="158" fill="#ff0000">-0.24%</tspan><tspan x="230" fill="#ff0000">L=6,927.25</tspan><tspan x="341" fill="#ff0000">O=6,945.00</tspan><tspan x="452" fill="#d0d4dc">Hi=6,951.50</tspan><tspan x="569" fill="#d0d4dc">Lo=6,921.50</tspan><tspan x="690" fill="#d0d4dc">V=274,866</tspan></text><rect x="2.85" y="576.3" width="1.3" height="1.5" fill="#10b0e8"/><rect x="11.85" y="576.3" width="1.3" height="1.5" fill="#10b0e8"/><rect x="20.85" y="576.3" width="1.3" height="1.5" fill="#10b0e8"/><rect x="29.85" y="576.3" width="1.3" height="1.5" fill="#10b0e8"/><rect x="38.85" y="576.3" width="1.3" height="1.5" fill="#10b0e8"/><rect x="47.85" y="576.3" width="1.3" height="1.5" fill="#10b0e8"/><rect x="56.85" y="576.3" width="1.3" height="1.5" fill="#10b0e8"/><rect x="65.85" y="576.3" width="1.3" height="1.5" fill="#10b0e8"/><rect x="74.85" y="576.3" width="1.3" height="1.5" fill="#10b0e8"/><rect x="83.85" y="576.3" width="1.3" height="1.5" fill="#10b0e8"/><rect x="92.85" y="576.3" width="1.3" height="1.5" fill="#10b0e8"/><rect x="101.85" y="576.3" width="1.3" height="1.5" fill="#10b0e8"/><rect x="110.85" y="576.3" width="1.3" height="1.5" fill="#10b0e8"/><rect x="119.85" y="576.3" width="1.3" height="1.5" fill="#10b0e8"/><rect x="128.85" y="576.3" width="1.3" height="1.5" fill="#10b0e8"/><rect x="137.85" y="576.3" width="1.3" height="1.5" fill="#10b0e8"/><rect x="146.85" y="576.3" width="1.3" height="1.5" fill="#10b0e8"/><rect x="155.85" y="576.3" width="1.3" height="1.5" fill="#10b0e8"/><rect x="164.85" y="576.3" width="1.3" height="1.5" fill="#10b0e8"/><rect x="173.85" y="576.3" width="1.3" height="1.5" fill="#10b0e8"/><rect x="182.85" y="576.3" width="1.3" height="1.5" fill="#10b0e8"/><rect x="191.85" y="576.3" width="1.3" height="1.5" fill="#10b0e8"/><rect x="200.85" y="576.3" width="1.3" height="1.5" fill="#10b0e8"/><rect x="209.85" y="576.3" width="1.3" height="1.5" fill="#10b0e8"/><rect x="218.85" y="576.3" width="1.3" height="1.5" fill="#10b0e8"/><rect x="227.85" y="576.3" width="1.3" height="1.5" fill="#10b0e8"/><rect x="236.85" y="576.3" width="1.3" height="1.5" fill="#10b0e8"/><rect x="245.85" y="576.3" width="1.3" height="1.5" fill="#10b0e8"/><rect x="254.85" y="576.3" width="1.3" height="1.5" fill="#10b0e8"/><rect x="263.85" y="576.3" width="1.3" height="1.5" fill="#10b0e8"/><rect x="272.85" y="576.3" width="1.3" height="1.5" fill="#10b0e8"/><rect x="281.85" y="576.3" width="1.3" height="1.5" fill="#10b0e8"/><rect x="290.85" y="576.3" width="1.3" height="1.5" fill="#10b0e8"/><rect x="299.85" y="576.3" width="1.3" height="1.5" fill="#10b0e8"/><rect x="308.85" y="576.3" width="1.3" height="1.5" fill="#10b0e8"/><rect x="317.85" y="576.3" width="1.3" height="1.5" fill="#10b0e8"/><rect x="326.85" y="576.3" width="1.3" height="1.5" fill="#10b0e8"/><rect x="335.85" y="576.3" width="1.3" height="1.5" fill="#10b0e8"/><rect x="344.85" y="576.3" width="1.3" height="1.5" fill="#10b0e8"/><rect x="353.85" y="576.3" width="1.3" height="1.5" fill="#10b0e8"/><rect x="362.85" y="576.3" width="1.3" height="1.5" fill="#10b0e8"/><rect x="371.85" y="576.3" width="1.3" height="1.5" fill="#10b0e8"/><rect x="380.85" y="576.3" width="1.3" height="1.5" fill="#10b0e8"/><rect x="389.85" y="576.3" width="1.3" height="1.5" fill="#10b0e8"/><rect x="398.85" y="576.3" width="1.3" height="1.5" fill="#10b0e8"/><rect x="407.85" y="576.3" width="1.3" height="1.5" fill="#10b0e8"/><rect x="416.85" y="576.3" width="1.3" height="1.5" fill="#10b0e8"/><rect x="425.85" y="576.3" width="1.3" height="1.5" fill="#10b0e8"/><rect x="434.85" y="576.3" width="1.3" height="1.5" fill="#10b0e8"/><rect x="443.85" y="576.3" width="1.3" height="1.5" fill="#10b0e8"/><rect x="452.85" y="576.3" width="1.3" height="1.5" fill="#10b0e8"/><rect x="461.85" y="576.3" width="1.3" height="1.5" fill="#10b0e8"/><rect x="470.85" y="576.3" width="1.3" height="1.5" fill="#10b0e8"/><rect x="479.85" y="576.3" width="1.3" height="1.5" fill="#10b0e8"/><rect x="488.85" y="576.3" width="1.3" height="1.5" fill="#10b0e8"/><rect x="497.85" y="576.3" width="1.3" height="1.5" fill="#10b0e8"/><rect x="506.85" y="576.3" width="1.3" height="1.5" fill="#10b0e8"/><rect x="515.85" y="576.3" width="1.3" height="1.5" fill="#10b0e8"/><rect x="524.85" y="576.3" width="1.3" height="1.5" fill="#10b0e8"/><rect x="533.85" y="576.3" width="1.3" height="1.5" fill="#10b0e8"/><rect x="542.85" y="576.3" width="1.3" height="1.5" fill="#10b0e8"/><rect x="551.85" y="576.3" width="1.3" height="1.5" fill="#10b0e8"/><rect x="560.85" y="576.3" width="1.3" height="1.5" fill="#10b0e8"/><rect x="569.85" y="576.3" width="1.3" height="1.5" fill="#10b0e8"/><rect x="578.85" y="576.3" width="1.3" height="1.5" fill="#10b0e8"/><rect x="587.85" y="576.3" width="1.3" height="1.5" fill="#10b0e8"/><rect x="596.85" y="576.3" width="1.3" height="1.5" fill="#10b0e8"/><rect x="605.85" y="576.3" width="1.3" height="1.5" fill="#10b0e8"/><rect x="614.85" y="576.3" width="1.3" height="1.5" fill="#10b0e8"/><rect x="623.85" y="576.3" width="1.3" height="1.5" fill="#10b0e8"/><rect x="632.85" y="576.3" width="1.3" height="1.5" fill="#10b0e8"/><rect x="641.85" y="576.3" width="1.3" height="1.5" fill="#10b0e8"/><rect x="650.85" y="576.3" width="1.3" height="1.5" fill="#10b0e8"/><rect x="659.85" y="576.3" width="1.3" height="1.5" fill="#10b0e8"/><rect x="668.85" y="576.3" width="1.3" height="1.5" fill="#10b0e8"/><rect x="677.85" y="576.3" width="1.3" height="1.5" fill="#10b0e8"/><rect x="686.85" y="576.3" width="1.3" height="1.5" fill="#10b0e8"/><rect x="695.85" y="576.3" width="1.3" height="1.5" fill="#10b0e8"/><rect x="704.85" y="576.3" width="1.3" height="1.5" fill="#10b0e8"/><rect x="713.85" y="576.3" width="1.3" height="1.5" fill="#10b0e8"/><rect x="722.85" y="576.3" width="1.3" height="1.5" fill="#10b0e8"/><rect x="731.85" y="576.3" width="1.3" height="1.5" fill="#10b0e8"/><rect x="740.85" y="576.3" width="1.3" height="1.5" fill="#10b0e8"/><rect x="749.85" y="576.3" width="1.3" height="1.5" fill="#10b0e8"/><rect x="758.85" y="576.3" width="1.3" height="1.5" fill="#10b0e8"/><rect x="767.85" y="576.3" width="1.3" height="1.5" fill="#10b0e8"/><rect x="776.85" y="576.3" width="1.3" height="1.5" fill="#10b0e8"/><rect x="785.85" y="576.3" width="1.3" height="1.5" fill="#10b0e8"/><rect x="794.85" y="576.3" width="1.3" height="1.5" fill="#10b0e8"/><rect x="803.85" y="576.3" width="1.3" height="1.5" fill="#10b0e8"/><rect x="812.85" y="576.3" width="1.3" height="1.5" fill="#10b0e8"/><rect x="821.85" y="576.3" width="1.3" height="1.5" fill="#10b0e8"/><rect x="830.85" y="576.3" width="1.3" height="1.5" fill="#10b0e8"/><rect x="839.85" y="576.3" width="1.3" height="1.5" fill="#10b0e8"/><rect x="848.85" y="576.3" width="1.3" height="1.5" fill="#10b0e8"/><rect x="857.85" y="576.3" width="1.3" height="1.5" fill="#10b0e8"/><rect x="866.85" y="576.3" width="1.3" height="1.5" fill="#10b0e8"/><rect x="875.85" y="569.5" width="1.3" height="8.3" fill="#10b0e8"/><rect x="884.85" y="576.3" width="1.3" height="1.5" fill="#10b0e8"/><rect x="893.85" y="574.6" width="1.3" height="3.2" fill="#10b0e8"/><rect x="902.85" y="575.6" width="1.3" height="2.2" fill="#10b0e8"/><rect x="911.85" y="576.3" width="1.3" height="1.5" fill="#10b0e8"/><rect x="920.85" y="574.6" width="1.3" height="3.2" fill="#10b0e8"/><rect x="929.85" y="570.9" width="1.3" height="6.9" fill="#10b0e8"/><rect x="938.85" y="567.8" width="1.3" height="10.0" fill="#10b0e8"/><rect x="947.85" y="572.6" width="1.3" height="5.2" fill="#10b0e8"/><rect x="956.85" y="576.3" width="1.3" height="1.5" fill="#10b0e8"/><rect x="965.85" y="572.6" width="1.3" height="5.2" fill="#10b0e8"/><rect x="974.85" y="573.5" width="1.3" height="4.3" fill="#10b0e8"/><rect x="983.85" y="576.3" width="1.3" height="1.5" fill="#10b0e8"/><rect x="992.85" y="575.6" width="1.3" height="2.2" fill="#10b0e8"/><rect x="1001.85" y="576.3" width="1.3" height="1.5" fill="#10b0e8"/><rect x="1010.85" y="571.6" width="1.3" height="6.2" fill="#10b0e8"/><rect x="1019.85" y="575.6" width="1.3" height="2.2" fill="#10b0e8"/><rect x="1028.85" y="576.3" width="1.3" height="1.5" fill="#10b0e8"/><rect x="1037.85" y="574.6" width="1.3" height="3.2" fill="#10b0e8"/><rect x="1046.85" y="576.3" width="1.3" height="1.5" fill="#10b0e8"/><rect x="1055.85" y="573.5" width="1.3" height="4.3" fill="#10b0e8"/><rect x="1064.85" y="576.3" width="1.3" height="1.5" fill="#10b0e8"/><rect x="1073.85" y="571.6" width="1.3" height="6.2" fill="#10b0e8"/><rect x="1082.85" y="576.3" width="1.3" height="1.5" fill="#10b0e8"/><rect x="1091.85" y="574.8" width="1.3" height="3.0" fill="#10b0e8"/><rect x="1100.85" y="575.3" width="1.3" height="2.5" fill="#10b0e8"/><rect x="1109.85" y="576.3" width="1.3" height="1.5" fill="#10b0e8"/><rect x="1118.85" y="576.3" width="1.3" height="1.5" fill="#10b0e8"/><rect x="1127.85" y="576.3" width="1.3" height="1.5" fill="#10b0e8"/><rect x="1136.85" y="576.3" width="1.3" height="1.5" fill="#10b0e8"/><rect x="1145.85" y="576.3" width="1.3" height="1.5" fill="#10b0e8"/><rect x="1154.85" y="576.3" width="1.3" height="1.5" fill="#10b0e8"/><rect x="1163.85" y="576.3" width="1.3" height="1.5" fill="#10b0e8"/><rect x="1172.85" y="576.3" width="1.3" height="1.5" fill="#10b0e8"/><rect x="1181.85" y="576.3" width="1.3" height="1.5" fill="#10b0e8"/><rect x="1190.85" y="576.3" width="1.3" height="1.5" fill="#10b0e8"/><rect x="1199.85" y="576.3" width="1.3" height="1.5" fill="#10b0e8"/><rect x="1208.85" y="576.3" width="1.3" height="1.5" fill="#10b0e8"/><rect x="1217.85" y="576.3" width="1.3" height="1.5" fill="#10b0e8"/><rect x="1226.85" y="576.3" width="1.3" height="1.5" fill="#10b0e8"/><rect x="1235.85" y="574.3" width="1.3" height="3.5" fill="#10b0e8"/><rect x="1244.85" y="576.3" width="1.3" height="1.5" fill="#10b0e8"/><rect x="1253.85" y="576.3" width="1.3" height="1.5" fill="#10b0e8"/><rect x="1262.85" y="576.3" width="1.3" height="1.5" fill="#10b0e8"/><rect x="1271.85" y="576.3" width="1.3" height="1.5" fill="#10b0e8"/><rect x="1280.85" y="576.3" width="1.3" height="1.5" fill="#10b0e8"/><rect x="1289.85" y="576.3" width="1.3" height="1.5" fill="#10b0e8"/><rect x="1298.85" y="576.3" width="1.3" height="1.5" fill="#10b0e8"/><rect x="1307.85" y="568.4" width="1.3" height="9.4" fill="#10b0e8"/><rect x="1316.85" y="576.3" width="1.3" height="1.5" fill="#10b0e8"/><rect x="1325.85" y="575.3" width="1.3" height="2.5" fill="#10b0e8"/><rect x="1334.85" y="576.3" width="1.3" height="1.5" fill="#10b0e8"/><rect x="1343.85" y="576.3" width="1.3" height="1.5" fill="#10b0e8"/><rect x="1352.85" y="576.3" width="1.3" height="1.5" fill="#10b0e8"/><rect x="1361.85" y="576.3" width="1.3" height="1.5" fill="#10b0e8"/><rect x="1370.85" y="576.3" width="1.3" height="1.5" fill="#10b0e8"/><rect x="1379.85" y="575.3" width="1.3" height="2.5" fill="#10b0e8"/><rect x="1388.85" y="576.3" width="1.3" height="1.5" fill="#10b0e8"/><rect x="1397.85" y="576.3" width="1.3" height="1.5" fill="#10b0e8"/><rect x="1406.85" y="576.3" width="1.3" height="1.5" fill="#10b0e8"/><rect x="1415.85" y="576.3" width="1.3" height="1.5" fill="#10b0e8"/><rect x="1424.85" y="576.3" width="1.3" height="1.5" fill="#10b0e8"/><rect x="1433.85" y="576.3" width="1.3" height="1.5" fill="#10b0e8"/><rect x="1442.85" y="576.3" width="1.3" height="1.5" fill="#10b0e8"/><rect x="1451.85" y="576.3" width="1.3" height="1.5" fill="#10b0e8"/><rect x="1460.85" y="576.3" width="1.3" height="1.5" fill="#10b0e8"/><rect x="1469.85" y="576.3" width="1.3" height="1.5" fill="#10b0e8"/><rect x="1478.85" y="576.3" width="1.3" height="1.5" fill="#10b0e8"/><rect x="1647" y="0" width="1" height="579" fill="#3c424c"/><rect x="1648" y="41.1" width="6" height="1" fill="#3c424c"/><text x="1655" y="48.4" font-size="18.67" fill="#cacdd5" font-weight="bold" text-anchor="start" transform="matrix(1,0,0,1.07,0,-3.39)" >6,950.00</text><rect x="1648" y="114.7" width="6" height="1" fill="#3c424c"/><text x="1655" y="122.0" font-size="18.67" fill="#cacdd5" font-weight="bold" text-anchor="start" transform="matrix(1,0,0,1.07,0,-8.54)" >6,945.00</text><rect x="1648" y="187.7" width="6" height="1" fill="#3c424c"/><text x="1655" y="195.0" font-size="18.67" fill="#cacdd5" font-weight="bold" text-anchor="start" transform="matrix(1,0,0,1.07,0,-13.65)" >6,940.00</text><rect x="1648" y="262.2" width="6" height="1" fill="#3c424c"/><text x="1655" y="269.5" font-size="18.67" fill="#cacdd5" font-weight="bold" text-anchor="start" transform="matrix(1,0,0,1.07,0,-18.87)" >6,935.00</text><rect x="1648" y="335.7" width="6" height="1" fill="#3c424c"/><text x="1655" y="343.0" font-size="18.67" fill="#cacdd5" font-weight="bold" text-anchor="start" transform="matrix(1,0,0,1.07,0,-24.01)" >6,930.00</text><rect x="1648" y="408.9" width="6" height="1" fill="#3c424c"/><text x="1655" y="416.2" font-size="18.67" fill="#cacdd5" font-weight="bold" text-anchor="start" transform="matrix(1,0,0,1.07,0,-29.13)" >6,925.00</text><rect x="1648" y="483.5" width="6" height="1" fill="#3c424c"/><text x="1655" y="490.8" font-size="18.67" fill="#cacdd5" font-weight="bold" text-anchor="start" transform="matrix(1,0,0,1.07,0,-34.36)" >6,920.00</text><rect x="1647" y="510" width="91" height="1" fill="#3c424c"/><rect x="1648" y="540.8" width="6" height="1" fill="#3c424c"/><rect x="1648" y="552.9" width="6" height="1" fill="#3c424c"/><rect x="1648" y="564.7" width="6" height="1" fill="#3c424c"/><text x="1655" y="548.1" font-size="18.67" fill="#cacdd5" font-weight="bold" text-anchor="start" transform="matrix(1,0,0,1.07,0,-38.37)" >14,000</text><text x="1655" y="572" font-size="18.67" fill="#cacdd5" font-weight="bold" text-anchor="start" transform="matrix(1,0,0,1.07,0,-40.04)" >6,000</text><path d="M1647,384.6 L1653,374 L1737,374 L1737,395.2 L1653,395.2 Z" fill="#00e4e8"/><text x="1654" y="390.7" font-size="18.67" fill="#000" font-weight="bold" text-anchor="start" transform="matrix(1,0,0,1.07,0,-27.35)" >6,926.05</text><path d="M1647,375.9 L1653,364.5 L1737,364.5 L1737,387.2 L1653,387.2 Z" fill="#00e600"/><text x="1654" y="382.7" font-size="18.67" fill="#000" font-weight="bold" text-anchor="start" transform="matrix(1,0,0,1.07,0,-26.79)" >6,927.25</text><path d="M1647,287.0 L1653,275.6 L1737,275.6 L1737,298.3 L1653,298.3 Z" fill="#e600e6"/><text x="1654" y="293.8" font-size="18.67" fill="#000" font-weight="bold" text-anchor="start" transform="matrix(1,0,0,1.07,0,-20.57)" >6,933.28</text><rect x="0" y="579" width="1738" height="1" fill="#3c424c"/><rect x="58" y="580" width="1" height="4" fill="#3c424c"/><text x="58.5" y="604" font-size="18.67" fill="#cacdd5" font-weight="bold" text-anchor="middle" transform="matrix(1,0,0,1.07,0,-42.28)" >08:00</text><rect x="148" y="580" width="1" height="4" fill="#3c424c"/><text x="148.5" y="604" font-size="18.67" fill="#cacdd5" font-weight="bold" text-anchor="middle" transform="matrix(1,0,0,1.07,0,-42.28)" >08:10</text><rect x="238" y="580" width="1" height="4" fill="#3c424c"/><text x="238.5" y="604" font-size="18.67" fill="#cacdd5" font-weight="bold" text-anchor="middle" transform="matrix(1,0,0,1.07,0,-42.28)" >08:20</text><rect x="328" y="580" width="1" height="4" fill="#3c424c"/><text x="328.5" y="604" font-size="18.67" fill="#cacdd5" font-weight="bold" text-anchor="middle" transform="matrix(1,0,0,1.07,0,-42.28)" >08:30</text><rect x="418" y="580" width="1" height="4" fill="#3c424c"/><text x="418.5" y="604" font-size="18.67" fill="#cacdd5" font-weight="bold" text-anchor="middle" transform="matrix(1,0,0,1.07,0,-42.28)" >08:40</text><rect x="508" y="580" width="1" height="4" fill="#3c424c"/><text x="508.5" y="604" font-size="18.67" fill="#cacdd5" font-weight="bold" text-anchor="middle" transform="matrix(1,0,0,1.07,0,-42.28)" >08:50</text><rect x="598" y="580" width="1" height="4" fill="#3c424c"/><text x="598.5" y="604" font-size="18.67" fill="#cacdd5" font-weight="bold" text-anchor="middle" transform="matrix(1,0,0,1.07,0,-42.28)" >09:00</text><rect x="688" y="580" width="1" height="4" fill="#3c424c"/><text x="688.5" y="604" font-size="18.67" fill="#cacdd5" font-weight="bold" text-anchor="middle" transform="matrix(1,0,0,1.07,0,-42.28)" >09:10</text><rect x="778" y="580" width="1" height="4" fill="#3c424c"/><text x="778.5" y="604" font-size="18.67" fill="#cacdd5" font-weight="bold" text-anchor="middle" transform="matrix(1,0,0,1.07,0,-42.28)" >09:20</text><rect x="868" y="580" width="1" height="4" fill="#3c424c"/><text x="868.5" y="604" font-size="18.67" fill="#cacdd5" font-weight="bold" text-anchor="middle" transform="matrix(1,0,0,1.07,0,-42.28)" >09:30</text><rect x="958" y="580" width="1" height="4" fill="#3c424c"/><text x="958.5" y="604" font-size="18.67" fill="#cacdd5" font-weight="bold" text-anchor="middle" transform="matrix(1,0,0,1.07,0,-42.28)" >09:40</text><rect x="1048" y="580" width="1" height="4" fill="#3c424c"/><text x="1048.5" y="604" font-size="18.67" fill="#cacdd5" font-weight="bold" text-anchor="middle" transform="matrix(1,0,0,1.07,0,-42.28)" >09:50</text><rect x="1138" y="580" width="1" height="4" fill="#3c424c"/><text x="1138.5" y="604" font-size="18.67" fill="#cacdd5" font-weight="bold" text-anchor="middle" transform="matrix(1,0,0,1.07,0,-42.28)" >10:00</text><rect x="1228" y="580" width="1" height="4" fill="#3c424c"/><text x="1228.5" y="604" font-size="18.67" fill="#cacdd5" font-weight="bold" text-anchor="middle" transform="matrix(1,0,0,1.07,0,-42.28)" >10:10</text><rect x="1318" y="580" width="1" height="4" fill="#3c424c"/><text x="1318.5" y="604" font-size="18.67" fill="#cacdd5" font-weight="bold" text-anchor="middle" transform="matrix(1,0,0,1.07,0,-42.28)" >10:20</text><rect x="1408" y="580" width="1" height="4" fill="#3c424c"/><text x="1408.5" y="604" font-size="18.67" fill="#cacdd5" font-weight="bold" text-anchor="middle" transform="matrix(1,0,0,1.07,0,-42.28)" >10:30</text><rect x="1498" y="580" width="1" height="4" fill="#3c424c"/><text x="1498.5" y="604" font-size="18.67" fill="#cacdd5" font-weight="bold" text-anchor="middle" transform="matrix(1,0,0,1.07,0,-42.28)" >10:40</text><rect x="1588" y="580" width="1" height="4" fill="#3c424c"/><text x="1588.5" y="604" font-size="18.67" fill="#cacdd5" font-weight="bold" text-anchor="middle" transform="matrix(1,0,0,1.07,0,-42.28)" >10:50</text><rect x="1738" y="0" width="5" height="623" fill="#2a2a2c"/><rect x="0" y="609" width="1738" height="14" fill="#3c424c"/><rect x="1" y="609" width="14" height="14" fill="#7a8494"/><rect x="1633" y="609" width="32" height="14" fill="#c4c8d0"/><rect x="1724" y="609" width="14" height="14" fill="#7a8494"/><rect x="0" y="623" width="1743" height="7" fill="#2c2c2e"/><rect x="0" y="630" width="1743" height="11" fill="#000000"/><rect x="0" y="630" width="1743" height="1" fill="#7a8494"/><rect x="14" y="631" width="278" height="4" fill="#c8d4e2"/><rect x="540" y="631" width="28" height="3" fill="#00e000"/><rect x="589" y="631" width="30" height="3" fill="#f4f4f4"/><rect x="851" y="631" width="306" height="4" fill="#c8d4e2"/><rect x="1460" y="631" width="28" height="3" fill="#00e000"/><rect x="1509" y="631" width="30" height="3" fill="#f4f4f4"/><rect x="0" y="641" width="821" height="438" fill="#0e0f12"/><rect x="416" y="803" width="312" height="50" fill="#0a2831"/><rect x="416" y="853" width="312" height="38" fill="#2f2229"/><rect x="416" y="891" width="312" height="51" fill="#300d12"/><text x="364" y="812.5" font-size="46" fill="rgba(120,140,170,0.075)" font-weight="bold" text-anchor="middle" >MESH26,5Min</text><text x="364.6" y="848" font-size="22.5" fill="rgba(120,140,170,0.075)" font-weight="bold" text-anchor="middle" transform="matrix(1,0,0,1.07,0,-59.36)" >Micro E-mini S&amp;P 500 Mar 2026</text><line x1="416" y1="803.5" x2="728" y2="803.5" stroke="#b4b4b4" stroke-width="1"/><line x1="416" y1="853.5" x2="728" y2="853.5" stroke="#b4b4b4" stroke-width="1"/><line x1="416" y1="891.5" x2="728" y2="891.5" stroke="#b4b4b4" stroke-width="1"/><line x1="416" y1="942.5" x2="728" y2="942.5" stroke="#b4b4b4" stroke-width="1"/><line x1="416.5" y1="803" x2="416.5" y2="943" stroke="#b4b4b4" stroke-width="1"/><rect x="3" y="901.0" width="1" height="15.8" fill="#969696"/><rect x="12" y="901.0" width="1" height="11.8" fill="#969696"/><rect x="21" y="903.0" width="1" height="12.0" fill="#969696"/><rect x="30" y="905.0" width="1" height="10.0" fill="#969696"/><rect x="39" y="901.0" width="1" height="8.7" fill="#969696"/><rect x="48" y="889.9" width="1" height="16.1" fill="#969696"/><rect x="57" y="886.0" width="1" height="11.8" fill="#969696"/><rect x="66" y="886.0" width="1" height="12.0" fill="#969696"/><rect x="75" y="876.0" width="1" height="28.0" fill="#969696"/><rect x="84" y="884.2" width="1" height="11.8" fill="#969696"/><rect x="93" y="878.3" width="1" height="8.5" fill="#969696"/><rect x="102" y="873.0" width="1" height="16.0" fill="#969696"/><rect x="111" y="871.0" width="1" height="10.0" fill="#969696"/><rect x="120" y="869.0" width="1" height="12.0" fill="#969696"/><rect x="129" y="867.0" width="1" height="12.0" fill="#969696"/><rect x="138" y="869.0" width="1" height="16.0" fill="#969696"/><rect x="147" y="865.0" width="1" height="15.9" fill="#969696"/><rect x="156" y="859.0" width="1" height="25.9" fill="#969696"/><rect x="165" y="861.0" width="1" height="18.0" fill="#969696"/><rect x="174" y="861.0" width="1" height="11.0" fill="#969696"/><rect x="183" y="846.0" width="1" height="19.7" fill="#969696"/><rect x="192" y="831.0" width="1" height="17.4" fill="#969696"/><rect x="201" y="826.8" width="1" height="10.8" fill="#969696"/><rect x="210" y="818.0" width="1" height="23.0" fill="#969696"/><rect x="219" y="818.0" width="1" height="11.3" fill="#969696"/><rect x="228" y="826.8" width="1" height="10.8" fill="#969696"/><rect x="237" y="824.8" width="1" height="10.6" fill="#969696"/><rect x="246" y="825.0" width="1" height="10.4" fill="#969696"/><rect x="255" y="819.7" width="1" height="15.7" fill="#969696"/><rect x="264" y="818.0" width="1" height="13.4" fill="#969696"/><rect x="273" y="819.7" width="1" height="15.7" fill="#969696"/><rect x="282" y="822.6" width="1" height="11.2" fill="#969696"/><rect x="291" y="809.7" width="1" height="17.9" fill="#969696"/><rect x="300" y="799.2" width="1" height="21.8" fill="#969696"/><rect x="309" y="795.0" width="1" height="13.7" fill="#969696"/><rect x="318" y="788.7" width="1" height="24.3" fill="#969696"/><rect x="327" y="785.0" width="1" height="23.7" fill="#969696"/><rect x="336" y="758.7" width="1" height="28.9" fill="#969696"/><rect x="345" y="745.9" width="1" height="22.8" fill="#969696"/><rect x="354" y="695.0" width="1" height="58.7" fill="#969696"/><rect x="363" y="699.0" width="1" height="26.9" fill="#969696"/><rect x="372" y="697.0" width="1" height="21.7" fill="#969696"/><rect x="381" y="703.0" width="1" height="17.9" fill="#969696"/><rect x="390" y="706.7" width="1" height="19.3" fill="#969696"/><rect x="399" y="718.0" width="1" height="15.0" fill="#969696"/><rect x="408" y="722.0" width="1" height="15.0" fill="#969696"/><rect x="417" y="729.3" width="1" height="24.5" fill="#969696"/><rect x="426" y="729.3" width="1" height="70.7" fill="#969696"/><rect x="435" y="765.0" width="1" height="97.0" fill="#969696"/><rect x="444" y="842.0" width="1" height="38.7" fill="#969696"/><rect x="453" y="859.0" width="1" height="60.0" fill="#969696"/><rect x="462" y="820.0" width="1" height="72.5" fill="#969696"/><rect x="471" y="814.0" width="1" height="58.4" fill="#969696"/><rect x="480" y="850.2" width="1" height="41.1" fill="#969696"/><rect x="489" y="871.3" width="1" height="26.7" fill="#969696"/><rect x="498" y="875.8" width="1" height="45.6" fill="#969696"/><rect x="507" y="897.0" width="1" height="54.4" fill="#969696"/><rect x="516" y="900.7" width="1" height="37.3" fill="#969696"/><rect x="525" y="885.8" width="1" height="34.9" fill="#969696"/><rect x="534" y="885.8" width="1" height="38.9" fill="#969696"/><rect x="543" y="894.7" width="1" height="26.7" fill="#969696"/><rect x="1" y="908.9" width="5" height="3.9" fill="#ff0000"/><rect x="10" y="905.0" width="5" height="3.0" fill="#00ff00"/><rect x="19" y="905.0" width="5" height="7.8" fill="#ff0000"/><rect x="28" y="908.9" width="5" height="3.9" fill="#00ff00"/><rect x="37" y="906.9" width="5" height="1.5" fill="#00ff00"/><rect x="46" y="889.9" width="5" height="14.1" fill="#00ff00"/><rect x="55" y="888.0" width="5" height="9.8" fill="#ff0000"/><rect x="64" y="886.0" width="5" height="10.0" fill="#00ff00"/><rect x="73" y="886.0" width="5" height="11.8" fill="#ff0000"/><rect x="82" y="884.2" width="5" height="11.8" fill="#00ff00"/><rect x="91" y="882.0" width="5" height="4.8" fill="#00ff00"/><rect x="100" y="878.0" width="5" height="4.9" fill="#00ff00"/><rect x="109" y="875.9" width="5" height="3.1" fill="#00ff00"/><rect x="118" y="871.0" width="5" height="6.0" fill="#00ff00"/><rect x="127" y="868.5" width="5" height="1.5" fill="#00ff00"/><rect x="136" y="871.0" width="5" height="9.9" fill="#ff0000"/><rect x="145" y="867.0" width="5" height="13.9" fill="#00ff00"/><rect x="154" y="869.3" width="5" height="2.7" fill="#ff0000"/><rect x="163" y="863.0" width="5" height="14.0" fill="#00ff00"/><rect x="172" y="863.0" width="5" height="2.7" fill="#ff0000"/><rect x="181" y="846.0" width="5" height="19.7" fill="#00ff00"/><rect x="190" y="833.0" width="5" height="15.4" fill="#00ff00"/><rect x="199" y="833.0" width="5" height="2.4" fill="#ff0000"/><rect x="208" y="828.8" width="5" height="6.6" fill="#00ff00"/><rect x="217" y="828.5" width="5" height="1.5" fill="#00ff00"/><rect x="226" y="831.0" width="5" height="4.4" fill="#ff0000"/><rect x="235" y="827.0" width="5" height="8.4" fill="#00ff00"/><rect x="244" y="825.0" width="5" height="6.4" fill="#ff0000"/><rect x="253" y="824.8" width="5" height="6.6" fill="#00ff00"/><rect x="262" y="823.0" width="5" height="2.4" fill="#00ff00"/><rect x="271" y="823.0" width="5" height="6.8" fill="#ff0000"/><rect x="280" y="824.8" width="5" height="6.6" fill="#00ff00"/><rect x="289" y="816.0" width="5" height="9.4" fill="#00ff00"/><rect x="298" y="799.2" width="5" height="15.5" fill="#00ff00"/><rect x="307" y="797.0" width="5" height="2.7" fill="#00ff00"/><rect x="316" y="799.2" width="5" height="2.5" fill="#00ff00"/><rect x="325" y="785.0" width="5" height="16.7" fill="#00ff00"/><rect x="334" y="763.0" width="5" height="24.6" fill="#00ff00"/><rect x="343" y="749.2" width="5" height="14.5" fill="#00ff00"/><rect x="352" y="714.2" width="5" height="37.8" fill="#00ff00"/><rect x="361" y="715.6" width="5" height="1.5" fill="#00ff00"/><rect x="370" y="707.0" width="5" height="9.7" fill="#00ff00"/><rect x="379" y="707.0" width="5" height="7.7" fill="#ff0000"/><rect x="388" y="714.2" width="5" height="6.7" fill="#ff0000"/><rect x="397" y="722.2" width="5" height="5.6" fill="#ff0000"/><rect x="406" y="726.7" width="5" height="8.4" fill="#ff0000"/><rect x="415" y="733.8" width="5" height="16.2" fill="#ff0000"/><rect x="424" y="751.2" width="5" height="29.3" fill="#ff0000"/><rect x="433" y="780.0" width="5" height="66.8" fill="#ff0000"/><rect x="442" y="846.4" width="5" height="19.4" fill="#ff0000"/><rect x="451" y="866.9" width="5" height="22.2" fill="#ff0000"/><rect x="460" y="822.8" width="5" height="64.1" fill="#00ff00"/><rect x="469" y="825.0" width="5" height="37.0" fill="#ff0000"/><rect x="478" y="859.0" width="5" height="20.0" fill="#ff0000"/><rect x="487" y="878.0" width="5" height="5.0" fill="#ff0000"/><rect x="496" y="879.8" width="5" height="26.0" fill="#ff0000"/><rect x="505" y="904.7" width="5" height="27.1" fill="#ff0000"/><rect x="514" y="915.8" width="5" height="16.0" fill="#00ff00"/><rect x="523" y="897.0" width="5" height="23.7" fill="#00ff00"/><rect x="532" y="897.0" width="5" height="11.0" fill="#ff0000"/><rect x="541" y="900.7" width="5" height="8.9" fill="#00ff00"/><line x1="0" y1="900.5" x2="728" y2="900.5" stroke="#a0a0a0" stroke-width="1"/><text x="0" y="896" font-size="20.8" fill="#8c8c8c" font-weight="normal" text-anchor="start" transform="matrix(1,0,0,1.07,0,-62.72)" >6,927.25</text><polyline points="3.0,850.0 40.0,851.0 100.0,852.5 150.0,853.2 185.0,853.4 201.7,852.0 285.0,851.0 310.0,849.3 331.8,847.6 346.8,843.4 353.4,840.0 368.5,835.0 393.5,831.0 412.8,828.6 417.3,826.8 426.2,820.6 432.8,819.5 452.9,828.6 461.8,830.1 472.9,832.0 495.0,836.8 517.4,844.6 533.0,848.6 543.6,848.6" fill="none" stroke="#e8e010" stroke-width="1.2" stroke-dasharray="17,5" stroke-linejoin="round"/><rect x="1.85" y="1045.3" width="1.3" height="1.5" fill="#10b0e8"/><rect x="10.85" y="1045.3" width="1.3" height="1.5" fill="#10b0e8"/><rect x="19.85" y="1045.3" width="1.3" height="1.5" fill="#10b0e8"/><rect x="28.85" y="1045.3" width="1.3" height="1.5" fill="#10b0e8"/><rect x="37.85" y="1045.3" width="1.3" height="1.5" fill="#10b0e8"/><rect x="46.85" y="1045.3" width="1.3" height="1.5" fill="#10b0e8"/><rect x="55.85" y="1045.3" width="1.3" height="1.5" fill="#10b0e8"/><rect x="64.85" y="1045.3" width="1.3" height="1.5" fill="#10b0e8"/><rect x="73.85" y="1045.3" width="1.3" height="1.5" fill="#10b0e8"/><rect x="82.85" y="1045.3" width="1.3" height="1.5" fill="#10b0e8"/><rect x="91.85" y="1045.3" width="1.3" height="1.5" fill="#10b0e8"/><rect x="100.85" y="1045.3" width="1.3" height="1.5" fill="#10b0e8"/><rect x="109.85" y="1045.3" width="1.3" height="1.5" fill="#10b0e8"/><rect x="118.85" y="1045.3" width="1.3" height="1.5" fill="#10b0e8"/><rect x="127.85" y="1045.3" width="1.3" height="1.5" fill="#10b0e8"/><rect x="136.85" y="1045.3" width="1.3" height="1.5" fill="#10b0e8"/><rect x="145.85" y="1045.3" width="1.3" height="1.5" fill="#10b0e8"/><rect x="154.85" y="1045.3" width="1.3" height="1.5" fill="#10b0e8"/><rect x="163.85" y="1045.3" width="1.3" height="1.5" fill="#10b0e8"/><rect x="172.85" y="1045.3" width="1.3" height="1.5" fill="#10b0e8"/><rect x="181.85" y="1045.3" width="1.3" height="1.5" fill="#10b0e8"/><rect x="190.85" y="1045.3" width="1.3" height="1.5" fill="#10b0e8"/><rect x="199.85" y="1045.3" width="1.3" height="1.5" fill="#10b0e8"/><rect x="208.85" y="1045.3" width="1.3" height="1.5" fill="#10b0e8"/><rect x="217.85" y="1045.3" width="1.3" height="1.5" fill="#10b0e8"/><rect x="226.85" y="1045.3" width="1.3" height="1.5" fill="#10b0e8"/><rect x="235.85" y="1045.3" width="1.3" height="1.5" fill="#10b0e8"/><rect x="244.85" y="1045.3" width="1.3" height="1.5" fill="#10b0e8"/><rect x="253.85" y="1045.3" width="1.3" height="1.5" fill="#10b0e8"/><rect x="262.85" y="1045.3" width="1.3" height="1.5" fill="#10b0e8"/><rect x="271.85" y="1045.3" width="1.3" height="1.5" fill="#10b0e8"/><rect x="280.85" y="1045.3" width="1.3" height="1.5" fill="#10b0e8"/><rect x="289.85" y="1045.3" width="1.3" height="1.5" fill="#10b0e8"/><rect x="298.85" y="1045.3" width="1.3" height="1.5" fill="#10b0e8"/><rect x="307.85" y="1045.3" width="1.3" height="1.5" fill="#10b0e8"/><rect x="316.85" y="1045.3" width="1.3" height="1.5" fill="#10b0e8"/><rect x="325.85" y="1045.3" width="1.3" height="1.5" fill="#10b0e8"/><rect x="334.85" y="1043.2" width="1.3" height="3.6" fill="#10b0e8"/><rect x="343.85" y="1044.1" width="1.3" height="2.7" fill="#10b0e8"/><rect x="352.85" y="1036.2" width="1.3" height="10.6" fill="#10b0e8"/><rect x="361.85" y="1042.1" width="1.3" height="4.7" fill="#10b0e8"/><rect x="370.85" y="1043.2" width="1.3" height="3.6" fill="#10b0e8"/><rect x="379.85" y="1045.3" width="1.3" height="1.5" fill="#10b0e8"/><rect x="388.85" y="1044.9" width="1.3" height="1.9" fill="#10b0e8"/><rect x="397.85" y="1044.9" width="1.3" height="1.9" fill="#10b0e8"/><rect x="406.85" y="1044.9" width="1.3" height="1.9" fill="#10b0e8"/><rect x="415.85" y="1042.1" width="1.3" height="4.7" fill="#10b0e8"/><rect x="424.85" y="1009.1" width="1.3" height="37.7" fill="#10b0e8"/><rect x="433.85" y="1000.9" width="1.3" height="45.9" fill="#10b0e8"/><rect x="442.85" y="1010.2" width="1.3" height="36.6" fill="#10b0e8"/><rect x="451.85" y="1009.1" width="1.3" height="37.7" fill="#10b0e8"/><rect x="460.85" y="1011.1" width="1.3" height="35.7" fill="#10b0e8"/><rect x="469.85" y="1017.2" width="1.3" height="29.6" fill="#10b0e8"/><rect x="478.85" y="1022.1" width="1.3" height="24.7" fill="#10b0e8"/><rect x="487.85" y="1029" width="1.3" height="17.8" fill="#10b0e8"/><rect x="496.85" y="1019" width="1.3" height="27.8" fill="#10b0e8"/><rect x="505.85" y="1017.2" width="1.3" height="29.6" fill="#10b0e8"/><rect x="514.85" y="1023" width="1.3" height="23.8" fill="#10b0e8"/><rect x="523.85" y="1028" width="1.3" height="18.8" fill="#10b0e8"/><rect x="532.85" y="1032" width="1.3" height="14.8" fill="#10b0e8"/><rect x="541.85" y="1041.8" width="1.3" height="5.0" fill="#10b0e8"/><rect x="730" y="641" width="1" height="408" fill="#3c424c"/><rect x="731" y="664.6" width="6" height="1" fill="#3c424c"/><text x="738" y="671.9" font-size="18.67" fill="#cacdd5" font-weight="bold" text-anchor="start" transform="matrix(1,0,0,1.07,0,-47.03)" >6,955.00</text><rect x="731" y="707.1" width="6" height="1" fill="#3c424c"/><text x="738" y="714.4" font-size="18.67" fill="#cacdd5" font-weight="bold" text-anchor="start" transform="matrix(1,0,0,1.07,0,-50.01)" >6,950.00</text><rect x="731" y="750.7" width="6" height="1" fill="#3c424c"/><text x="738" y="758.0" font-size="18.67" fill="#cacdd5" font-weight="bold" text-anchor="start" transform="matrix(1,0,0,1.07,0,-53.06)" >6,945.00</text><rect x="731" y="792.8" width="6" height="1" fill="#3c424c"/><text x="738" y="800.1" font-size="18.67" fill="#cacdd5" font-weight="bold" text-anchor="start" transform="matrix(1,0,0,1.07,0,-56.01)" >6,940.00</text><rect x="731" y="834.1" width="6" height="1" fill="#3c424c"/><text x="738" y="841.4" font-size="18.67" fill="#cacdd5" font-weight="bold" text-anchor="start" transform="matrix(1,0,0,1.07,0,-58.90)" >6,935.00</text><rect x="731" y="877.9" width="6" height="1" fill="#3c424c"/><text x="738" y="885.2" font-size="18.67" fill="#cacdd5" font-weight="bold" text-anchor="start" transform="matrix(1,0,0,1.07,0,-61.96)" >6,930.00</text><rect x="731" y="919.6" width="6" height="1" fill="#3c424c"/><text x="738" y="926.9" font-size="18.67" fill="#cacdd5" font-weight="bold" text-anchor="start" transform="matrix(1,0,0,1.07,0,-64.88)" >6,925.00</text><rect x="731" y="962" width="6" height="1" fill="#3c424c"/><rect x="730" y="978" width="91" height="1" fill="#3c424c"/><rect x="731" y="1001.8" width="6" height="1" fill="#3c424c"/><rect x="731" y="1017.0" width="6" height="1" fill="#3c424c"/><rect x="731" y="1031.9" width="6" height="1" fill="#3c424c"/><text x="738" y="1009.1" font-size="18.67" fill="#cacdd5" font-weight="bold" text-anchor="start" transform="matrix(1,0,0,1.07,0,-70.64)" >18,000</text><text x="738" y="1039.2" font-size="18.67" fill="#cacdd5" font-weight="bold" text-anchor="start" transform="matrix(1,0,0,1.07,0,-72.74)" >6,000</text><rect x="0" y="1049" width="821" height="1" fill="#3c424c"/><path d="M730,848.2 L736,836.7 L819,836.7 L819,859.6 L736,859.6 Z" fill="#e8e800"/><text x="737" y="855.1" font-size="18.67" fill="#000" font-weight="bold" text-anchor="start" transform="matrix(1,0,0,1.07,0,-59.86)" >6,933.49</text><path d="M730,901.0 L736,890.2 L819,890.2 L819,911.8 L736,911.8 Z" fill="#00e000"/><text x="737" y="907.3" font-size="18.67" fill="#000" font-weight="bold" text-anchor="start" transform="matrix(1,0,0,1.07,0,-63.51)" >6,927.25</text><path d="M730,1040.9 L736,1029.8 L819,1029.8 L819,1052 L736,1052 Z" fill="#00b0e8"/><text x="737" y="1047.5" font-size="18.67" fill="#000" font-weight="bold" text-anchor="start" transform="matrix(1,0,0,1.07,0,-73.33)" >2,492</text><rect x="39" y="1050" width="1" height="4" fill="#3c424c"/><rect x="93" y="1050" width="1" height="4" fill="#3c424c"/><rect x="147" y="1050" width="1" height="4" fill="#3c424c"/><rect x="201" y="1050" width="1" height="4" fill="#3c424c"/><rect x="255" y="1050" width="1" height="4" fill="#3c424c"/><rect x="309" y="1050" width="1" height="4" fill="#3c424c"/><rect x="363" y="1050" width="1" height="4" fill="#3c424c"/><rect x="417" y="1050" width="1" height="4" fill="#3c424c"/><rect x="471" y="1050" width="1" height="4" fill="#3c424c"/><rect x="525" y="1050" width="1" height="4" fill="#3c424c"/><rect x="579" y="1050" width="1" height="4" fill="#3c424c"/><rect x="633" y="1050" width="1" height="4" fill="#3c424c"/><rect x="687" y="1050" width="1" height="4" fill="#3c424c"/><text x="39" y="1074" font-size="18.67" fill="#cacdd5" font-weight="bold" text-anchor="middle" transform="matrix(1,0,0,1.07,0,-75.18)" >06:00</text><text x="147" y="1074" font-size="18.67" fill="#cacdd5" font-weight="bold" text-anchor="middle" transform="matrix(1,0,0,1.07,0,-75.18)" >07:00</text><text x="255" y="1074" font-size="18.67" fill="#cacdd5" font-weight="bold" text-anchor="middle" transform="matrix(1,0,0,1.07,0,-75.18)" >08:00</text><text x="363" y="1074" font-size="18.67" fill="#cacdd5" font-weight="bold" text-anchor="middle" transform="matrix(1,0,0,1.07,0,-75.18)" >09:00</text><text x="471" y="1074" font-size="18.67" fill="#cacdd5" font-weight="bold" text-anchor="middle" transform="matrix(1,0,0,1.07,0,-75.18)" >10:00</text><text x="579" y="1074" font-size="18.67" fill="#cacdd5" font-weight="bold" text-anchor="middle" transform="matrix(1,0,0,1.07,0,-75.18)" >11:00</text><text x="687" y="1074" font-size="18.67" fill="#cacdd5" font-weight="bold" text-anchor="middle" transform="matrix(1,0,0,1.07,0,-75.18)" >12:00</text><text x="1" y="660" font-size="19.2" fill="#d0d4dc" font-weight="bold" text-anchor="start" transform="matrix(1,0,0,1.07,0,-46.20)" >MESH26 - 5 min</text><rect x="821" y="641" width="6" height="438" fill="#2a2a2c"/><rect x="827" y="631" width="4" height="448" fill="#000000"/><rect x="828" y="631" width="2" height="448" fill="#464c58"/><rect x="831" y="639" width="912" height="440" fill="#0e0f12"/><rect x="831" y="639" width="6" height="440" fill="#2a2a2c"/><rect x="837" y="639" width="813" height="22" fill="#131417"/><text x="1242.5" y="813.5" font-size="46.5" fill="rgba(120,140,170,0.075)" font-weight="bold" text-anchor="middle" >MESH26,15Min</text><text x="1243" y="849.6" font-size="23.1" fill="rgba(120,140,170,0.075)" font-weight="bold" text-anchor="middle" transform="matrix(1,0,0,1.07,0,-59.47)" >Micro E-mini S&amp;P 500 Mar 2026</text><rect x="837" y="661" width="811" height="40" fill="rgba(255,255,255,0.115)"/><rect x="837" y="829" width="811" height="48" fill="rgba(255,255,255,0.115)"/><line x1="1103.5" y1="661" x2="1103.5" y2="1053" stroke="#4a4a4a" stroke-width="1" stroke-dasharray="4,4"/><rect x="839" y="748.8" width="1" height="27.1" fill="#969696"/><rect x="845" y="762.0" width="1" height="24.9" fill="#969696"/><rect x="851" y="770.8" width="1" height="14.2" fill="#969696"/><rect x="857" y="732.2" width="1" height="43.7" fill="#969696"/><rect x="863" y="723.9" width="1" height="15.7" fill="#969696"/><rect x="869" y="719.0" width="1" height="31.0" fill="#969696"/><rect x="875" y="729.9" width="1" height="38.1" fill="#969696"/><rect x="881" y="732.0" width="1" height="27.0" fill="#969696"/><rect x="887" y="729.9" width="1" height="29.1" fill="#969696"/><rect x="893" y="719.0" width="1" height="24.7" fill="#969696"/><rect x="899" y="737.0" width="1" height="43.0" fill="#969696"/><rect x="905" y="742.8" width="1" height="35.2" fill="#969696"/><rect x="911" y="741.0" width="1" height="20.0" fill="#969696"/><rect x="917" y="737.0" width="1" height="33.0" fill="#969696"/><rect x="923" y="733.8" width="1" height="61.0" fill="#969696"/><rect x="929" y="681.8" width="1" height="128.1" fill="#969696"/><rect x="935" y="710.2" width="1" height="106.6" fill="#969696"/><rect x="941" y="769.0" width="1" height="54.0" fill="#969696"/><rect x="947" y="798.9" width="1" height="36.8" fill="#969696"/><rect x="953" y="745.3" width="1" height="79.4" fill="#969696"/><rect x="959" y="719.0" width="1" height="44.0" fill="#969696"/><rect x="965" y="676.0" width="1" height="62.0" fill="#969696"/><rect x="971" y="696.8" width="1" height="71.2" fill="#969696"/><rect x="977" y="746.9" width="1" height="36.9" fill="#969696"/><rect x="983" y="776.9" width="1" height="22.1" fill="#969696"/><rect x="989" y="771.0" width="1" height="42.9" fill="#969696"/><rect x="995" y="749.0" width="1" height="29.0" fill="#969696"/><rect x="1001" y="749.0" width="1" height="39.7" fill="#969696"/><rect x="1007" y="741.0" width="1" height="46.0" fill="#969696"/><rect x="1013" y="743.0" width="1" height="22.0" fill="#969696"/><rect x="1019" y="732.0" width="1" height="36.0" fill="#969696"/><rect x="1025" y="733.9" width="1" height="23.0" fill="#969696"/><rect x="1031" y="735.1" width="1" height="36.6" fill="#969696"/><rect x="1037" y="734.0" width="1" height="18.8" fill="#969696"/><rect x="1043" y="730.0" width="1" height="24.8" fill="#969696"/><rect x="1049" y="737.0" width="1" height="40.7" fill="#969696"/><rect x="1055" y="754.0" width="1" height="49.7" fill="#969696"/><rect x="1061" y="749.0" width="1" height="39.7" fill="#969696"/><rect x="1067" y="739.0" width="1" height="27.7" fill="#969696"/><rect x="1073" y="749.0" width="1" height="73.6" fill="#969696"/><rect x="1079" y="790.0" width="1" height="28.6" fill="#969696"/><rect x="1085" y="786.3" width="1" height="18.2" fill="#969696"/><rect x="1091" y="790.0" width="1" height="13.7" fill="#969696"/><rect x="1097" y="790.0" width="1" height="11.6" fill="#969696"/><rect x="1103" y="776.9" width="1" height="48.1" fill="#969696"/><rect x="1109" y="811.0" width="1" height="15.5" fill="#969696"/><rect x="1115" y="811.0" width="1" height="36.8" fill="#969696"/><rect x="1121" y="818.3" width="1" height="15.3" fill="#969696"/><rect x="1127" y="820.0" width="1" height="37.0" fill="#969696"/><rect x="1133" y="827.8" width="1" height="18.2" fill="#969696"/><rect x="1139" y="834.9" width="1" height="22.1" fill="#969696"/><rect x="1145" y="852.2" width="1" height="45.8" fill="#969696"/><rect x="1151" y="877.4" width="1" height="50.5" fill="#969696"/><rect x="1157" y="875.0" width="1" height="23.0" fill="#969696"/><rect x="1163" y="880.0" width="1" height="23.8" fill="#969696"/><rect x="1169" y="880.0" width="1" height="18.0" fill="#969696"/><rect x="1175" y="872.7" width="1" height="23.2" fill="#969696"/><rect x="1181" y="866.9" width="1" height="25.8" fill="#969696"/><rect x="1187" y="858.5" width="1" height="17.4" fill="#969696"/><rect x="1193" y="853.8" width="1" height="36.7" fill="#969696"/><rect x="1199" y="848.0" width="1" height="18.0" fill="#969696"/><rect x="1205" y="847.0" width="1" height="26.8" fill="#969696"/><rect x="1211" y="871.0" width="1" height="13.5" fill="#969696"/><rect x="1217" y="867.2" width="1" height="15.8" fill="#969696"/><rect x="1223" y="861.2" width="1" height="16.2" fill="#969696"/><rect x="1229" y="852.2" width="1" height="10.3" fill="#969696"/><rect x="1235" y="857.7" width="1" height="18.2" fill="#969696"/><rect x="1241" y="871.0" width="1" height="12.0" fill="#969696"/><rect x="1247" y="867.2" width="1" height="15.8" fill="#969696"/><rect x="1253" y="872.7" width="1" height="16.3" fill="#969696"/><rect x="1259" y="868.8" width="1" height="29.1" fill="#969696"/><rect x="1265" y="890.0" width="1" height="30.8" fill="#969696"/><rect x="1271" y="905.0" width="1" height="17.7" fill="#969696"/><rect x="1277" y="907.0" width="1" height="32.5" fill="#969696"/><rect x="1283" y="918.0" width="1" height="13.7" fill="#969696"/><rect x="1289" y="916.2" width="1" height="11.7" fill="#969696"/><rect x="1295" y="911.0" width="1" height="32.4" fill="#969696"/><rect x="1301" y="905.0" width="1" height="32.5" fill="#969696"/><rect x="1307" y="894.0" width="1" height="15.7" fill="#969696"/><rect x="1313" y="895.0" width="1" height="31.6" fill="#969696"/><rect x="1319" y="899.0" width="1" height="32.7" fill="#969696"/><rect x="1325" y="914.0" width="1" height="21.6" fill="#969696"/><rect x="1331" y="929.0" width="1" height="44.9" fill="#969696"/><rect x="1337" y="944.0" width="1" height="20.0" fill="#969696"/><rect x="1343" y="925.9" width="1" height="44.1" fill="#969696"/><rect x="1349" y="927.2" width="1" height="27.6" fill="#969696"/><rect x="1355" y="933.0" width="1" height="15.6" fill="#969696"/><rect x="1361" y="938.9" width="1" height="19.8" fill="#969696"/><rect x="1367" y="946.0" width="1" height="21.8" fill="#969696"/><rect x="1373" y="933.0" width="1" height="19.8" fill="#969696"/><rect x="1379" y="925.9" width="1" height="23.0" fill="#969696"/><rect x="1385" y="935.0" width="1" height="11.7" fill="#969696"/><rect x="1391" y="922.0" width="1" height="17.5" fill="#969696"/><rect x="1397" y="912.0" width="1" height="26.0" fill="#969696"/><rect x="1403" y="907.0" width="1" height="17.6" fill="#969696"/><rect x="1409" y="903.2" width="1" height="17.5" fill="#969696"/><rect x="1415" y="897.5" width="1" height="23.1" fill="#969696"/><rect x="1421" y="869.7" width="1" height="33.6" fill="#969696"/><rect x="1427" y="861.6" width="1" height="19.7" fill="#969696"/><rect x="1433" y="862.7" width="1" height="14.4" fill="#969696"/><rect x="1439" y="861.6" width="1" height="16.2" fill="#969696"/><rect x="1445" y="840.7" width="1" height="29.0" fill="#969696"/><rect x="1451" y="809.0" width="1" height="48.0" fill="#969696"/><rect x="1457" y="751.6" width="1" height="64.8" fill="#969696"/><rect x="1463" y="753.9" width="1" height="25.9" fill="#969696"/><rect x="1469" y="772.9" width="1" height="30.8" fill="#969696"/><rect x="1475" y="782.8" width="1" height="134.4" fill="#969696"/><rect x="1481" y="858.0" width="1" height="92.7" fill="#969696"/><rect x="1487" y="890.0" width="1" height="62.6" fill="#969696"/><rect x="1493" y="921.8" width="1" height="56.7" fill="#969696"/><rect x="1499" y="921.8" width="1" height="34.7" fill="#969696"/><rect x="837" y="751.9" width="5" height="11.1" fill="#ff0000"/><rect x="843" y="764.0" width="5" height="16.0" fill="#ff0000"/><rect x="849" y="770.8" width="5" height="7.2" fill="#00ff00"/><rect x="855" y="740.9" width="5" height="33.1" fill="#00ff00"/><rect x="861" y="732.2" width="5" height="7.4" fill="#00ff00"/><rect x="867" y="732.2" width="5" height="9.5" fill="#ff0000"/><rect x="873" y="732.2" width="5" height="11.5" fill="#00ff00"/><rect x="879" y="733.8" width="5" height="18.2" fill="#ff0000"/><rect x="885" y="737.0" width="5" height="15.0" fill="#00ff00"/><rect x="891" y="738.5" width="5" height="1.5" fill="#00ff00"/><rect x="897" y="739.0" width="5" height="17.7" fill="#ff0000"/><rect x="903" y="746.9" width="5" height="9.8" fill="#00ff00"/><rect x="909" y="745.3" width="5" height="2.0" fill="#00ff00"/><rect x="915" y="745.3" width="5" height="22.4" fill="#ff0000"/><rect x="921" y="764.0" width="5" height="27.0" fill="#ff0000"/><rect x="927" y="716.0" width="5" height="73.0" fill="#00ff00"/><rect x="933" y="716.0" width="5" height="91.9" fill="#ff0000"/><rect x="939" y="806.6" width="5" height="1.5" fill="#00ff00"/><rect x="945" y="807.0" width="5" height="9.8" fill="#ff0000"/><rect x="951" y="751.9" width="5" height="64.9" fill="#00ff00"/><rect x="957" y="737.0" width="5" height="18.0" fill="#00ff00"/><rect x="963" y="701.2" width="5" height="34.7" fill="#00ff00"/><rect x="969" y="701.2" width="5" height="50.7" fill="#ff0000"/><rect x="975" y="749.0" width="5" height="34.8" fill="#ff0000"/><rect x="981" y="783.2" width="5" height="15.8" fill="#ff0000"/><rect x="987" y="774.8" width="5" height="24.2" fill="#00ff00"/><rect x="993" y="773.0" width="5" height="2.8" fill="#00ff00"/><rect x="999" y="754.0" width="5" height="17.7" fill="#00ff00"/><rect x="1005" y="751.2" width="5" height="3.6" fill="#00ff00"/><rect x="1011" y="745.0" width="5" height="4.6" fill="#00ff00"/><rect x="1017" y="745.0" width="5" height="7.8" fill="#ff0000"/><rect x="1023" y="745.0" width="5" height="6.7" fill="#00ff00"/><rect x="1029" y="735.1" width="5" height="8.7" fill="#00ff00"/><rect x="1035" y="735.1" width="5" height="4.5" fill="#ff0000"/><rect x="1041" y="741.0" width="5" height="2.8" fill="#ff0000"/><rect x="1047" y="743.0" width="5" height="21.8" fill="#ff0000"/><rect x="1053" y="761.6" width="5" height="23.2" fill="#ff0000"/><rect x="1059" y="763.8" width="5" height="23.0" fill="#00ff00"/><rect x="1065" y="752.2" width="5" height="14.5" fill="#00ff00"/><rect x="1071" y="751.2" width="5" height="50.4" fill="#ff0000"/><rect x="1077" y="798.0" width="5" height="3.6" fill="#00ff00"/><rect x="1083" y="797.5" width="5" height="1.5" fill="#00ff00"/><rect x="1089" y="792.2" width="5" height="7.5" fill="#00ff00"/><rect x="1095" y="794.2" width="5" height="5.5" fill="#ff0000"/><rect x="1101" y="801.0" width="5" height="15.8" fill="#ff0000"/><rect x="1107" y="817.5" width="5" height="1.5" fill="#00ff00"/><rect x="1113" y="818.3" width="5" height="2.2" fill="#ff0000"/><rect x="1119" y="819.9" width="5" height="3.1" fill="#00ff00"/><rect x="1125" y="822.3" width="5" height="13.4" fill="#ff0000"/><rect x="1131" y="832.9" width="5" height="5.1" fill="#00ff00"/><rect x="1137" y="834.9" width="5" height="17.8" fill="#ff0000"/><rect x="1143" y="853.8" width="5" height="35.2" fill="#ff0000"/><rect x="1149" y="886.0" width="5" height="3.0" fill="#00ff00"/><rect x="1155" y="882.2" width="5" height="6.8" fill="#00ff00"/><rect x="1161" y="884.2" width="5" height="8.5" fill="#ff0000"/><rect x="1167" y="889.2" width="5" height="1.5" fill="#00ff00"/><rect x="1173" y="884.2" width="5" height="4.8" fill="#00ff00"/><rect x="1179" y="866.9" width="5" height="20.0" fill="#00ff00"/><rect x="1185" y="865.3" width="5" height="4.7" fill="#00ff00"/><rect x="1191" y="858.0" width="5" height="8.0" fill="#00ff00"/><rect x="1197" y="852.2" width="5" height="8.7" fill="#00ff00"/><rect x="1203" y="853.8" width="5" height="20.0" fill="#ff0000"/><rect x="1209" y="873.2" width="5" height="4.2" fill="#ff0000"/><rect x="1215" y="875.0" width="5" height="2.4" fill="#00ff00"/><rect x="1221" y="861.2" width="5" height="14.7" fill="#00ff00"/><rect x="1227" y="861.8" width="5" height="1.5" fill="#ff0000"/><rect x="1233" y="862.2" width="5" height="13.7" fill="#ff0000"/><rect x="1239" y="875.0" width="5" height="2.4" fill="#ff0000"/><rect x="1245" y="877.4" width="5" height="3.6" fill="#ff0000"/><rect x="1251" y="879.0" width="5" height="4.0" fill="#00ff00"/><rect x="1257" y="879.0" width="5" height="15.8" fill="#ff0000"/><rect x="1263" y="890.0" width="5" height="22.9" fill="#ff0000"/><rect x="1269" y="907.0" width="5" height="6.0" fill="#00ff00"/><rect x="1275" y="911.0" width="5" height="18.8" fill="#ff0000"/><rect x="1281" y="922.0" width="5" height="9.7" fill="#00ff00"/><rect x="1287" y="918.0" width="5" height="5.0" fill="#00ff00"/><rect x="1293" y="920.0" width="5" height="13.7" fill="#ff0000"/><rect x="1299" y="907.0" width="5" height="24.7" fill="#00ff00"/><rect x="1305" y="903.0" width="5" height="4.7" fill="#00ff00"/><rect x="1311" y="901.0" width="5" height="12.0" fill="#ff0000"/><rect x="1317" y="912.0" width="5" height="14.6" fill="#ff0000"/><rect x="1323" y="924.0" width="5" height="11.6" fill="#ff0000"/><rect x="1329" y="935.0" width="5" height="17.8" fill="#ff0000"/><rect x="1335" y="950.2" width="5" height="13.8" fill="#ff0000"/><rect x="1341" y="937.0" width="5" height="27.0" fill="#00ff00"/><rect x="1347" y="937.0" width="5" height="9.7" fill="#ff0000"/><rect x="1353" y="944.0" width="5" height="2.7" fill="#00ff00"/><rect x="1359" y="946.0" width="5" height="6.8" fill="#ff0000"/><rect x="1365" y="948.0" width="5" height="6.8" fill="#00ff00"/><rect x="1371" y="937.0" width="5" height="11.9" fill="#00ff00"/><rect x="1377" y="935.0" width="5" height="4.8" fill="#ff0000"/><rect x="1383" y="938.9" width="5" height="3.0" fill="#ff0000"/><rect x="1389" y="922.0" width="5" height="16.0" fill="#00ff00"/><rect x="1395" y="917.7" width="5" height="5.3" fill="#00ff00"/><rect x="1401" y="909.0" width="5" height="9.8" fill="#00ff00"/><rect x="1407" y="905.0" width="5" height="2.7" fill="#00ff00"/><rect x="1413" y="903.3" width="5" height="3.9" fill="#00ff00"/><rect x="1419" y="877.1" width="5" height="26.2" fill="#00ff00"/><rect x="1425" y="877.0" width="5" height="1.5" fill="#00ff00"/><rect x="1431" y="866.9" width="5" height="10.2" fill="#00ff00"/><rect x="1437" y="866.6" width="5" height="1.5" fill="#00ff00"/><rect x="1443" y="843.0" width="5" height="24.4" fill="#00ff00"/><rect x="1449" y="813.0" width="5" height="34.7" fill="#00ff00"/><rect x="1455" y="770.8" width="5" height="42.8" fill="#00ff00"/><rect x="1461" y="770.8" width="5" height="5.1" fill="#ff0000"/><rect x="1467" y="776.6" width="5" height="23.1" fill="#ff0000"/><rect x="1473" y="800.7" width="5" height="103.3" fill="#ff0000"/><rect x="1479" y="898.6" width="5" height="7.0" fill="#00ff00"/><rect x="1485" y="897.0" width="5" height="42.6" fill="#ff0000"/><rect x="1491" y="931.0" width="5" height="8.6" fill="#00ff00"/><rect x="1497" y="931.0" width="5" height="4.7" fill="#ff0000"/><line x1="837" y1="701.5" x2="1648" y2="701.5" stroke="#8c8c8c" stroke-width="1"/><line x1="837" y1="828.5" x2="1648" y2="828.5" stroke="#8c8c8c" stroke-width="1"/><line x1="837" y1="877.5" x2="1648" y2="877.5" stroke="#8c8c8c" stroke-width="1"/><line x1="837" y1="934.5" x2="1648" y2="934.5" stroke="#a0a0a0" stroke-width="1"/><text x="837.5" y="930" font-size="20.6" fill="#8c8c8c" font-weight="normal" text-anchor="start" transform="matrix(1,0,0,1.07,0,-65.10)" >6,927.25</text><polyline points="839.0,745.6 844.5,747.2 913.8,747.2 917.0,747.2 923.2,755.9 929.5,753.5 935.8,755.9 945.3,764.5 953.2,768.5 961.0,766.0 969.0,761.4 976.8,760.6 985.0,763.0 989.5,763.2 1011.5,762.7 1035.0,761.6 1058.8,761.6 1068.2,762.0 1082.4,763.2 1097.8,764.6" fill="none" stroke="#f4e800" stroke-width="1.1" stroke-linejoin="round"/><polyline points="1103.4,805.3 1115.5,813.1 1121.8,814.7 1125.0,816.8 1132.9,819.1 1139.2,822.3 1151.0,849.9 1164.4,855.4 1188.0,859.3 1211.7,860.6 1243.2,860.6 1260.5,861.7 1275.0,866.0 1283.0,866.9 1301.0,872.3 1324.5,875.3 1331.0,880.1 1342.7,884.4 1360.8,886.3 1371.2,888.9 1384.2,890.5 1397.2,891.5 1428.2,891.7 1439.7,890.0 1451.3,885.9 1458.3,877.8 1469.8,870.8 1475.6,864.6 1483.7,874.3 1493.0,884.7 1499.5,887.0" fill="none" stroke="#f4e800" stroke-width="1.1" stroke-linejoin="round"/><rect x="837.95" y="1050.2" width="1.3" height="1.3" fill="#1e90f0"/><rect x="843.95" y="1050.2" width="1.3" height="1.3" fill="#1e90f0"/><rect x="849.95" y="1050.2" width="1.3" height="1.3" fill="#1e90f0"/><rect x="855.95" y="1050.2" width="1.3" height="1.3" fill="#1e90f0"/><rect x="861.95" y="1050.2" width="1.3" height="1.3" fill="#1e90f0"/><rect x="867.95" y="1050.2" width="1.3" height="1.3" fill="#1e90f0"/><rect x="873.95" y="1050.2" width="1.3" height="1.3" fill="#1e90f0"/><rect x="879.95" y="1050.2" width="1.3" height="1.3" fill="#1e90f0"/><rect x="885.95" y="1050.2" width="1.3" height="1.3" fill="#1e90f0"/><rect x="891.95" y="1050.2" width="1.3" height="1.3" fill="#1e90f0"/><rect x="897.95" y="1050.2" width="1.3" height="1.3" fill="#1e90f0"/><rect x="903.95" y="1050.2" width="1.3" height="1.3" fill="#1e90f0"/><rect x="909.95" y="1050.2" width="1.3" height="1.3" fill="#1e90f0"/><rect x="915.95" y="1050.2" width="1.3" height="1.3" fill="#1e90f0"/><rect x="921.95" y="1043" width="1.3" height="8.5" fill="#1e90f0"/><rect x="927.95" y="1037" width="1.3" height="14.5" fill="#1e90f0"/><rect x="933.95" y="1041" width="1.3" height="10.5" fill="#1e90f0"/><rect x="939.95" y="1043" width="1.3" height="8.5" fill="#1e90f0"/><rect x="945.95" y="1047" width="1.3" height="4.5" fill="#1e90f0"/><rect x="951.95" y="1046" width="1.3" height="5.5" fill="#1e90f0"/><rect x="957.95" y="1048" width="1.3" height="3.5" fill="#1e90f0"/><rect x="963.95" y="1047" width="1.3" height="4.5" fill="#1e90f0"/><rect x="969.95" y="1047" width="1.3" height="4.5" fill="#1e90f0"/><rect x="975.95" y="1050.2" width="1.3" height="1.3" fill="#1e90f0"/><rect x="981.95" y="1049" width="1.3" height="2.5" fill="#1e90f0"/><rect x="987.95" y="1050.2" width="1.3" height="1.3" fill="#1e90f0"/><rect x="993.95" y="1050.2" width="1.3" height="1.3" fill="#1e90f0"/><rect x="999.95" y="1050.2" width="1.3" height="1.3" fill="#1e90f0"/><rect x="1005.95" y="1050.2" width="1.3" height="1.3" fill="#1e90f0"/><rect x="1011.95" y="1050.2" width="1.3" height="1.3" fill="#1e90f0"/><rect x="1017.95" y="1050.2" width="1.3" height="1.3" fill="#1e90f0"/><rect x="1023.95" y="1050.2" width="1.3" height="1.3" fill="#1e90f0"/><rect x="1029.95" y="1050.2" width="1.3" height="1.3" fill="#1e90f0"/><rect x="1035.95" y="1050.2" width="1.3" height="1.3" fill="#1e90f0"/><rect x="1041.95" y="1050.2" width="1.3" height="1.3" fill="#1e90f0"/><rect x="1047.95" y="1050.2" width="1.3" height="1.3" fill="#1e90f0"/><rect x="1053.95" y="1050.2" width="1.3" height="1.3" fill="#1e90f0"/><rect x="1059.95" y="1050.2" width="1.3" height="1.3" fill="#1e90f0"/><rect x="1065.95" y="1050.2" width="1.3" height="1.3" fill="#1e90f0"/><rect x="1071.95" y="1043.8" width="1.3" height="7.7" fill="#1e90f0"/><rect x="1077.95" y="1050.2" width="1.3" height="1.3" fill="#1e90f0"/><rect x="1083.95" y="1050.2" width="1.3" height="1.3" fill="#1e90f0"/><rect x="1089.95" y="1050.2" width="1.3" height="1.3" fill="#1e90f0"/><rect x="1095.95" y="1050.2" width="1.3" height="1.3" fill="#1e90f0"/><rect x="1101.95" y="1050.2" width="1.3" height="1.3" fill="#1e90f0"/><rect x="1107.95" y="1050.2" width="1.3" height="1.3" fill="#1e90f0"/><rect x="1113.95" y="1050.2" width="1.3" height="1.3" fill="#1e90f0"/><rect x="1119.95" y="1050.2" width="1.3" height="1.3" fill="#1e90f0"/><rect x="1125.95" y="1050.2" width="1.3" height="1.3" fill="#1e90f0"/><rect x="1131.95" y="1050.2" width="1.3" height="1.3" fill="#1e90f0"/><rect x="1137.95" y="1050.2" width="1.3" height="1.3" fill="#1e90f0"/><rect x="1143.95" y="1050.2" width="1.3" height="1.3" fill="#1e90f0"/><rect x="1149.95" y="1050.2" width="1.3" height="1.3" fill="#1e90f0"/><rect x="1155.95" y="1050.2" width="1.3" height="1.3" fill="#1e90f0"/><rect x="1161.95" y="1050.2" width="1.3" height="1.3" fill="#1e90f0"/><rect x="1167.95" y="1050.2" width="1.3" height="1.3" fill="#1e90f0"/><rect x="1173.95" y="1050.2" width="1.3" height="1.3" fill="#1e90f0"/><rect x="1179.95" y="1050.2" width="1.3" height="1.3" fill="#1e90f0"/><rect x="1185.95" y="1050.2" width="1.3" height="1.3" fill="#1e90f0"/><rect x="1191.95" y="1050.2" width="1.3" height="1.3" fill="#1e90f0"/><rect x="1197.95" y="1050.2" width="1.3" height="1.3" fill="#1e90f0"/><rect x="1203.95" y="1050.2" width="1.3" height="1.3" fill="#1e90f0"/><rect x="1209.95" y="1050.2" width="1.3" height="1.3" fill="#1e90f0"/><rect x="1215.95" y="1050.2" width="1.3" height="1.3" fill="#1e90f0"/><rect x="1221.95" y="1050.2" width="1.3" height="1.3" fill="#1e90f0"/><rect x="1227.95" y="1050.2" width="1.3" height="1.3" fill="#1e90f0"/><rect x="1233.95" y="1050.2" width="1.3" height="1.3" fill="#1e90f0"/><rect x="1239.95" y="1050.2" width="1.3" height="1.3" fill="#1e90f0"/><rect x="1245.95" y="1050.2" width="1.3" height="1.3" fill="#1e90f0"/><rect x="1251.95" y="1050.2" width="1.3" height="1.3" fill="#1e90f0"/><rect x="1257.95" y="1050.2" width="1.3" height="1.3" fill="#1e90f0"/><rect x="1263.95" y="1050.2" width="1.3" height="1.3" fill="#1e90f0"/><rect x="1269.95" y="1050.2" width="1.3" height="1.3" fill="#1e90f0"/><rect x="1275.95" y="1050.2" width="1.3" height="1.3" fill="#1e90f0"/><rect x="1281.95" y="1050.2" width="1.3" height="1.3" fill="#1e90f0"/><rect x="1287.95" y="1050.2" width="1.3" height="1.3" fill="#1e90f0"/><rect x="1293.95" y="1050.2" width="1.3" height="1.3" fill="#1e90f0"/><rect x="1299.95" y="1050.2" width="1.3" height="1.3" fill="#1e90f0"/><rect x="1305.95" y="1050.2" width="1.3" height="1.3" fill="#1e90f0"/><rect x="1311.95" y="1050.2" width="1.3" height="1.3" fill="#1e90f0"/><rect x="1317.95" y="1050.2" width="1.3" height="1.3" fill="#1e90f0"/><rect x="1323.95" y="1050.2" width="1.3" height="1.3" fill="#1e90f0"/><rect x="1329.95" y="1050.2" width="1.3" height="1.3" fill="#1e90f0"/><rect x="1335.95" y="1050.2" width="1.3" height="1.3" fill="#1e90f0"/><rect x="1341.95" y="1050.2" width="1.3" height="1.3" fill="#1e90f0"/><rect x="1347.95" y="1050.2" width="1.3" height="1.3" fill="#1e90f0"/><rect x="1353.95" y="1050.2" width="1.3" height="1.3" fill="#1e90f0"/><rect x="1359.95" y="1050.2" width="1.3" height="1.3" fill="#1e90f0"/><rect x="1365.95" y="1050.2" width="1.3" height="1.3" fill="#1e90f0"/><rect x="1371.95" y="1050.2" width="1.3" height="1.3" fill="#1e90f0"/><rect x="1377.95" y="1050.2" width="1.3" height="1.3" fill="#1e90f0"/><rect x="1383.95" y="1050.2" width="1.3" height="1.3" fill="#1e90f0"/><rect x="1389.95" y="1050.2" width="1.3" height="1.3" fill="#1e90f0"/><rect x="1395.95" y="1050.2" width="1.3" height="1.3" fill="#1e90f0"/><rect x="1401.95" y="1050.2" width="1.3" height="1.3" fill="#1e90f0"/><rect x="1407.95" y="1050.2" width="1.3" height="1.3" fill="#1e90f0"/><rect x="1413.95" y="1050.2" width="1.3" height="1.3" fill="#1e90f0"/><rect x="1419.95" y="1050.2" width="1.3" height="1.3" fill="#1e90f0"/><rect x="1425.95" y="1050.2" width="1.3" height="1.3" fill="#1e90f0"/><rect x="1431.95" y="1050.2" width="1.3" height="1.3" fill="#1e90f0"/><rect x="1437.95" y="1050.2" width="1.3" height="1.3" fill="#1e90f0"/><rect x="1443.95" y="1050.2" width="1.3" height="1.3" fill="#1e90f0"/><rect x="1449.95" y="1050.2" width="1.3" height="1.3" fill="#1e90f0"/><rect x="1455.95" y="1050.2" width="1.3" height="1.3" fill="#1e90f0"/><rect x="1461.95" y="1050.2" width="1.3" height="1.3" fill="#1e90f0"/><rect x="1467.95" y="1050.2" width="1.3" height="1.3" fill="#1e90f0"/><rect x="1473.95" y="1038" width="1.3" height="13.5" fill="#1e90f0"/><rect x="1479.95" y="1040" width="1.3" height="11.5" fill="#1e90f0"/><rect x="1485.95" y="1044.6" width="1.3" height="6.9" fill="#1e90f0"/><rect x="1491.95" y="1043.8" width="1.3" height="7.7" fill="#1e90f0"/><rect x="1497.95" y="1050.2" width="1.3" height="1.3" fill="#1e90f0"/><rect x="1650" y="639" width="1" height="414" fill="#3c424c"/><rect x="1651" y="686.8" width="6" height="1" fill="#3c424c"/><text x="1658" y="694.1" font-size="18.67" fill="#cacdd5" font-weight="bold" text-anchor="start" transform="matrix(1,0,0,1.07,0,-48.59)" >6,960.00</text><rect x="1651" y="725.7" width="6" height="1" fill="#3c424c"/><text x="1658" y="733.0" font-size="18.67" fill="#cacdd5" font-weight="bold" text-anchor="start" transform="matrix(1,0,0,1.07,0,-51.31)" >6,955.00</text><rect x="1651" y="763.5" width="6" height="1" fill="#3c424c"/><text x="1658" y="770.8" font-size="18.67" fill="#cacdd5" font-weight="bold" text-anchor="start" transform="matrix(1,0,0,1.07,0,-53.96)" >6,950.00</text><rect x="1651" y="800.7" width="6" height="1" fill="#3c424c"/><text x="1658" y="808.0" font-size="18.67" fill="#cacdd5" font-weight="bold" text-anchor="start" transform="matrix(1,0,0,1.07,0,-56.56)" >6,945.00</text><rect x="1651" y="838.4" width="6" height="1" fill="#3c424c"/><text x="1658" y="845.7" font-size="18.67" fill="#cacdd5" font-weight="bold" text-anchor="start" transform="matrix(1,0,0,1.07,0,-59.20)" >6,940.00</text><rect x="1651" y="876.1" width="6" height="1" fill="#3c424c"/><text x="1658" y="883.4" font-size="18.67" fill="#cacdd5" font-weight="bold" text-anchor="start" transform="matrix(1,0,0,1.07,0,-61.84)" >6,935.00</text><rect x="1651" y="913.9" width="6" height="1" fill="#3c424c"/><text x="1658" y="921.2" font-size="18.67" fill="#cacdd5" font-weight="bold" text-anchor="start" transform="matrix(1,0,0,1.07,0,-64.48)" >6,930.00</text><rect x="1651" y="951.8" width="6" height="1" fill="#3c424c"/><text x="1658" y="959.1" font-size="18.67" fill="#cacdd5" font-weight="bold" text-anchor="start" transform="matrix(1,0,0,1.07,0,-67.14)" >6,925.00</text><rect x="1650" y="981" width="91" height="1" fill="#3c424c"/><rect x="1651" y="1007.2" width="6" height="1" fill="#3c424c"/><rect x="1651" y="1019.7" width="6" height="1" fill="#3c424c"/><rect x="1651" y="1032.9" width="6" height="1" fill="#3c424c"/><text x="1658" y="1014.5" font-size="18.67" fill="#cacdd5" font-weight="bold" text-anchor="start" transform="matrix(1,0,0,1.07,0,-71.02)" >140,000</text><text x="1658" y="1040.2" font-size="18.67" fill="#cacdd5" font-weight="bold" text-anchor="start" transform="matrix(1,0,0,1.07,0,-72.81)" >60,000</text><rect x="837" y="1053" width="904" height="1" fill="#3c424c"/><path d="M1650.7,887.0 L1656.7,875.8 L1739.5,875.8 L1739.5,898.1 L1656.7,898.1 Z" fill="#e8e800"/><text x="1657.7" y="893.6" font-size="18.67" fill="#000" font-weight="bold" text-anchor="start" transform="matrix(1,0,0,1.07,0,-62.55)" >6,933.64</text><path d="M1650.7,934.8 L1656.7,923.3 L1739.5,923.3 L1739.5,946.2 L1656.7,946.2 Z" fill="#e80000"/><text x="1657.7" y="941.7" font-size="18.67" fill="#000" font-weight="bold" text-anchor="start" transform="matrix(1,0,0,1.07,0,-65.92)" >6,927.25</text><path d="M1650.7,1049.8 L1656.7,1038.5 L1739.5,1038.5 L1739.5,1061.2 L1656.7,1061.2 Z" fill="#1e88e8"/><text x="1657.7" y="1056.7" font-size="18.67" fill="#000" font-weight="bold" text-anchor="start" transform="matrix(1,0,0,1.07,0,-73.97)" >8,977</text><rect x="905" y="1054" width="1" height="4" fill="#3c424c"/><rect x="977" y="1054" width="1" height="4" fill="#3c424c"/><rect x="1049" y="1054" width="1" height="4" fill="#3c424c"/><rect x="1100" y="1054" width="1" height="4" fill="#3c424c"/><rect x="1169" y="1054" width="1" height="4" fill="#3c424c"/><rect x="1241" y="1054" width="1" height="10" fill="#3c424c"/><rect x="1313" y="1054" width="1" height="4" fill="#3c424c"/><rect x="1385" y="1054" width="1" height="4" fill="#3c424c"/><rect x="1457" y="1054" width="1" height="4" fill="#3c424c"/><rect x="1529" y="1054" width="1" height="4" fill="#3c424c"/><rect x="1601" y="1054" width="1" height="4" fill="#3c424c"/><text x="905.4" y="1077.5" font-size="18.67" fill="#cacdd5" font-weight="bold" text-anchor="middle" transform="matrix(1,0,0,1.07,0,-75.43)" >09:00</text><text x="977.4" y="1077.5" font-size="18.67" fill="#cacdd5" font-weight="bold" text-anchor="middle" transform="matrix(1,0,0,1.07,0,-75.43)" >12:00</text><text x="1049.4" y="1077.5" font-size="18.67" fill="#cacdd5" font-weight="bold" text-anchor="middle" transform="matrix(1,0,0,1.07,0,-75.43)" >15:00</text><text x="1169.5" y="1077.5" font-size="18.67" fill="#cacdd5" font-weight="bold" text-anchor="middle" transform="matrix(1,0,0,1.07,0,-75.43)" >21:00</text><text x="1313.4" y="1077.5" font-size="18.67" fill="#cacdd5" font-weight="bold" text-anchor="middle" transform="matrix(1,0,0,1.07,0,-75.43)" >03:00</text><text x="1385.4" y="1077.5" font-size="18.67" fill="#cacdd5" font-weight="bold" text-anchor="middle" transform="matrix(1,0,0,1.07,0,-75.43)" >06:00</text><text x="1457.4" y="1077.5" font-size="18.67" fill="#cacdd5" font-weight="bold" text-anchor="middle" transform="matrix(1,0,0,1.07,0,-75.43)" >09:00</text><text x="1529.4" y="1077.5" font-size="18.67" fill="#cacdd5" font-weight="bold" text-anchor="middle" transform="matrix(1,0,0,1.07,0,-75.43)" >12:00</text><text x="1601.4" y="1077.5" font-size="18.67" fill="#cacdd5" font-weight="bold" text-anchor="middle" transform="matrix(1,0,0,1.07,0,-75.43)" >15:00</text><text x="1241.5" y="1077.5" font-size="18.67" fill="#ffffff" font-weight="bold" text-anchor="middle" transform="matrix(1,0,0,1.07,0,-75.43)" >12/31</text><text x="838" y="658" font-size="19.2" fill="#d0d4dc" font-weight="bold" text-anchor="start" transform="matrix(1,0,0,1.07,0,-46.06)" >MESH26 - 15 min</text><rect x="1741" y="639" width="2" height="440" fill="#2a2a2c"/></svg></body></html>
